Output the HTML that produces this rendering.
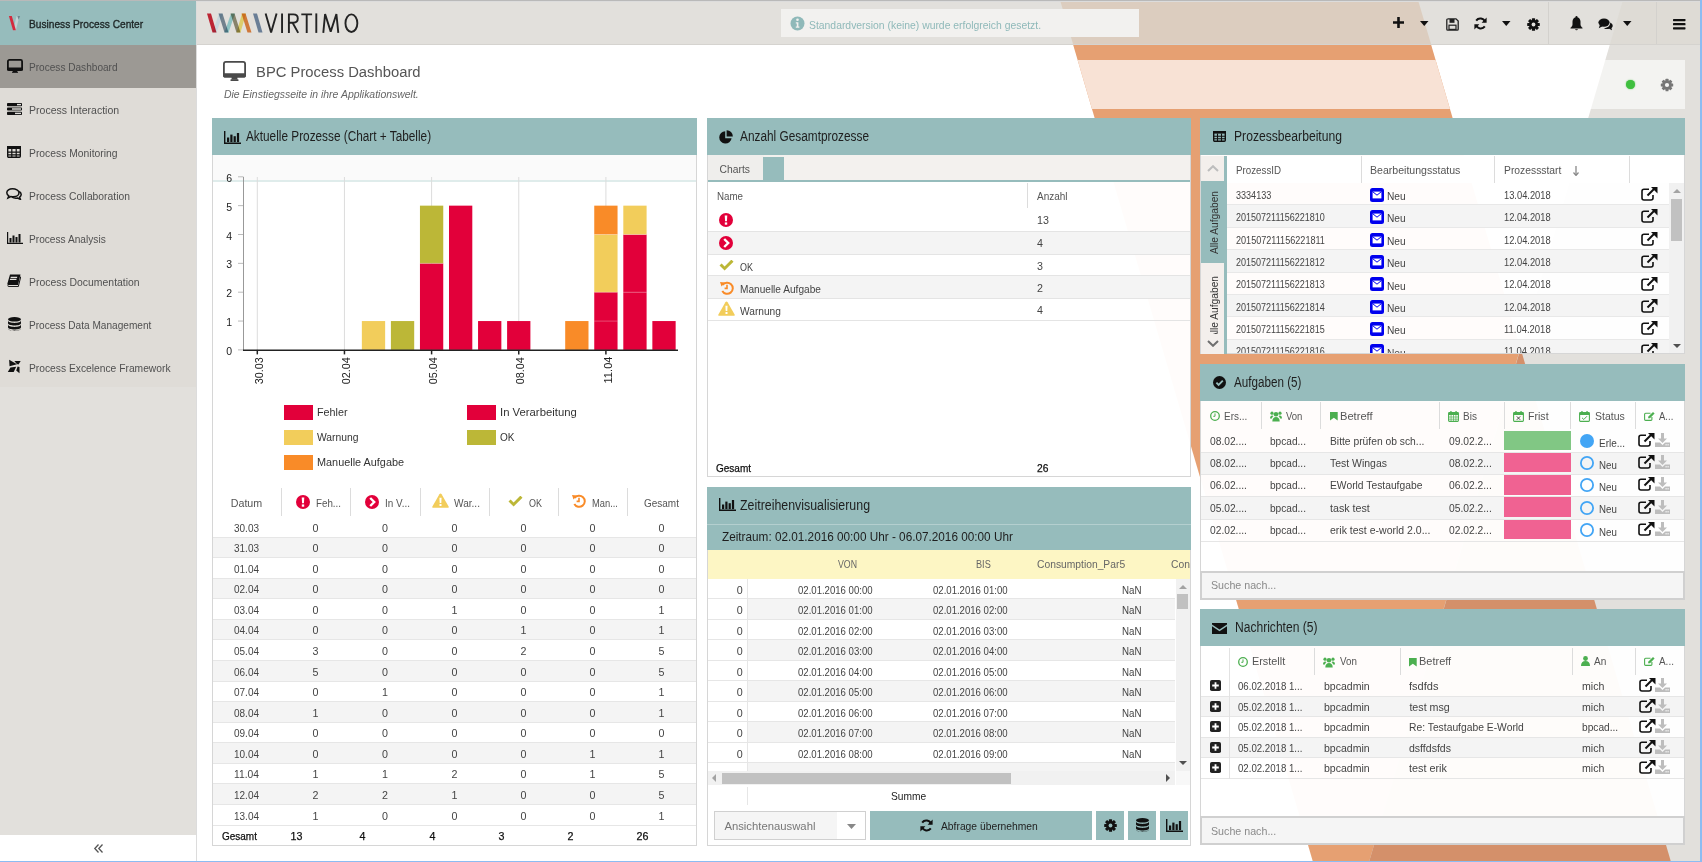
<!DOCTYPE html>
<html><head><meta charset="utf-8">
<style>
*{box-sizing:border-box;margin:0;padding:0}
html,body{width:1702px;height:862px;overflow:hidden;background:#fff;font-family:"Liberation Sans",sans-serif;color:#444}
.abs{position:absolute}
.t{position:absolute;white-space:nowrap;line-height:1}
/* background */
#bg{position:absolute;left:0;top:0;width:1702px;height:862px;overflow:hidden}
/* sidebar */
#side{position:absolute;left:0;top:1px;width:196px;height:860px;background:#fff}
#sidehdr{position:absolute;left:0;top:0;width:196px;height:44px;background:#96bcbc}
#sidenav{position:absolute;left:0;top:44px;width:196px;height:790px;background:#e2e0dc}
.nav{position:absolute;left:0;width:196px;height:43px}
.nav.act{background:#9c9994}
.nav .lbl{position:absolute;left:29px;top:16px;font-size:10.5px;color:#4a4a4a;letter-spacing:-0.2px;white-space:nowrap}
.nav svg{position:absolute;left:7px;top:13px}
#sideborder{position:absolute;left:196px;top:1px;width:1px;height:860px;background:#dcdcdc}
/* topbar */
#top{position:absolute;left:197px;top:1px;width:1503px;height:44px;background:#e2e0dc;border-bottom:1px solid #d5d3cf}
/* panels */
.panel{position:absolute;background:rgba(255,255,255,0.96);border:1px solid #d9d9d9}
.ph{position:absolute;left:-1px;top:-1px;right:-1px;height:37px;background:#96bcbc}
.ph .tt{position:absolute;left:34px;top:12px;font-size:13px;color:#222;letter-spacing:-0.5px;white-space:nowrap}
.ph svg{position:absolute;left:11px;top:11px}
</style></head>
<body>
<div id="bg">
  <!-- big orange parallelogram -->
  <svg class="abs" style="left:0;top:0" width="1702" height="862">
    <polygon points="1060,0 1418,0 1671,862 1313,862" fill="#e6a072"/>
    <polygon points="1077.6,60 1435.6,60 1450,109 1092,109" fill="#f8e2d5"/>
    <polygon points="1623,0 1702,0 1702,862 1369,862" fill="#e2e0dc"/>
    <polygon points="1520.6,348.6 1671,862 1369,862" fill="#d4906a"/>
  </svg>
</div>


<svg class="abs" style="left:223px;top:61px" width="23" height="20" viewBox="0 0 23 20"><rect x="0.9" y="0.9" width="21.2" height="14.8" rx="2" fill="none" stroke="#4a4a4a" stroke-width="1.8"/><rect x="0" y="12.2" width="23" height="4.3" rx="1.4" fill="#4a4a4a"/><rect x="8.6" y="16" width="5.8" height="2.6" fill="#4a4a4a"/><rect x="7.5" y="18.3" width="8" height="1.7" rx="0.5" fill="#4a4a4a"/></svg>
<div class="t" style="left:256.30px;top:63.96px;font-size:15.2px;color:#555;transform:scaleX(0.975);transform-origin:0 0">BPC Process Dashboard</div>
<div class="t" style="left:224.00px;top:88.93px;font-size:10.5px;color:#666;font-style:italic;transform:scaleX(0.995);transform-origin:0 0">Die Einstiegsseite in ihre Applikationswelt.</div>
<div class="abs" style="left:1540px;top:60px;width:145px;height:49px;background:rgba(255,255,255,0.6)"></div>
<div class="abs" style="left:1625.8px;top:79.8px;width:9.4px;height:9.4px;border-radius:50%;background:#3fbf3f;box-shadow:0 0 1.5px #3fbf3f"></div>
<svg class="abs" style="left:1660.25px;top:78px" width="14" height="14" viewBox="-7 -7 14 14"><g fill="#777"><circle r="4.8"/><rect x="-1.5" y="-6.2" width="3" height="12.4" rx="0.5"/><rect x="-1.5" y="-6.2" width="3" height="12.4" rx="0.5" transform="rotate(45)"/><rect x="-1.5" y="-6.2" width="3" height="12.4" rx="0.5" transform="rotate(90)"/><rect x="-1.5" y="-6.2" width="3" height="12.4" rx="0.5" transform="rotate(135)"/></g><circle r="2.1" fill="#f5f5f4"/></svg>
<div class="abs" style="left:212px;top:118px;width:485px;height:728px;background:rgba(255,255,255,0.97);border:1px solid #d6d6d6"></div>
<div class="abs" style="left:212px;top:118px;width:485px;height:37px;background:#96bcbc;"></div><div class="t" style="left:246.00px;top:128.87px;font-size:14px;color:#1e1e1e;transform:scaleX(0.843);transform-origin:0 0">Aktuelle Prozesse (Chart + Tabelle)</div>
<svg class="abs" style="left:224px;top:131px" width="17" height="13" viewBox="0 0 17 13"><path d="M0.7 0V12.3H17" fill="none" stroke="#111" stroke-width="1.4"/><rect x="3" y="6.5" width="2.2" height="4.6" fill="#111"/><rect x="6.3" y="3.6" width="2.2" height="7.5" fill="#111"/><rect x="9.6" y="5.2" width="2.2" height="5.9" fill="#111"/><rect x="12.9" y="2" width="2.2" height="9.1" fill="#111"/></svg>
<div class="abs" style="left:213px;top:155px;width:483px;height:25px;background:#fafafa;"></div>
<div class="abs" style="left:213px;top:180px;width:483px;height:2px;background:#dfeceb;"></div>
<svg class="abs" style="left:0;top:0" width="700" height="500"><line x1="238" y1="349.90" x2="243.5" y2="349.90" stroke="#bbb" stroke-width="1"/><line x1="238" y1="321.05" x2="243.5" y2="321.05" stroke="#bbb" stroke-width="1"/><line x1="238" y1="292.20" x2="243.5" y2="292.20" stroke="#bbb" stroke-width="1"/><line x1="238" y1="263.35" x2="243.5" y2="263.35" stroke="#bbb" stroke-width="1"/><line x1="238" y1="234.50" x2="243.5" y2="234.50" stroke="#bbb" stroke-width="1"/><line x1="238" y1="205.65" x2="243.5" y2="205.65" stroke="#bbb" stroke-width="1"/><line x1="238" y1="176.80" x2="243.5" y2="176.80" stroke="#bbb" stroke-width="1"/><line x1="243.5" y1="177" x2="243.5" y2="349.9" stroke="#999" stroke-width="1"/><line x1="257.30" y1="177" x2="257.30" y2="349.9" stroke="#dcdcdc" stroke-width="1"/><line x1="257.30" y1="349.9" x2="257.30" y2="354.4" stroke="#222" stroke-width="1.5"/><line x1="344.45" y1="177" x2="344.45" y2="349.9" stroke="#dcdcdc" stroke-width="1"/><line x1="344.45" y1="349.9" x2="344.45" y2="354.4" stroke="#222" stroke-width="1.5"/><line x1="431.60" y1="177" x2="431.60" y2="349.9" stroke="#dcdcdc" stroke-width="1"/><line x1="431.60" y1="349.9" x2="431.60" y2="354.4" stroke="#222" stroke-width="1.5"/><line x1="518.75" y1="177" x2="518.75" y2="349.9" stroke="#dcdcdc" stroke-width="1"/><line x1="518.75" y1="349.9" x2="518.75" y2="354.4" stroke="#222" stroke-width="1.5"/><line x1="605.90" y1="177" x2="605.90" y2="349.9" stroke="#dcdcdc" stroke-width="1"/><line x1="605.90" y1="349.9" x2="605.90" y2="354.4" stroke="#222" stroke-width="1.5"/><rect x="361.85" y="321.05" width="23.3" height="28.85" fill="#f2cd5b"/><rect x="390.90" y="321.05" width="23.3" height="28.85" fill="#bcb737"/><rect x="419.95" y="263.35" width="23.3" height="86.55" fill="#e2003a"/><rect x="419.95" y="205.65" width="23.3" height="57.70" fill="#bcb737"/><rect x="419.95" y="262.85" width="23.3" height="1" fill="#fff" opacity="0.25"/><rect x="449.00" y="205.65" width="23.3" height="144.25" fill="#e2003a"/><rect x="478.05" y="321.05" width="23.3" height="28.85" fill="#e2003a"/><rect x="507.10" y="321.05" width="23.3" height="28.85" fill="#e2003a"/><rect x="565.20" y="321.05" width="23.3" height="28.85" fill="#f98b28"/><rect x="594.25" y="321.05" width="23.3" height="28.85" fill="#e2003a"/><rect x="594.25" y="292.20" width="23.3" height="28.85" fill="#e2003a"/><rect x="594.25" y="320.55" width="23.3" height="1" fill="#fff" opacity="0.25"/><rect x="594.25" y="234.50" width="23.3" height="57.70" fill="#f2cd5b"/><rect x="594.25" y="291.70" width="23.3" height="1" fill="#fff" opacity="0.25"/><rect x="594.25" y="205.65" width="23.3" height="28.85" fill="#f98b28"/><rect x="594.25" y="234.00" width="23.3" height="1" fill="#fff" opacity="0.25"/><rect x="623.30" y="292.20" width="23.3" height="57.70" fill="#e2003a"/><rect x="623.30" y="234.50" width="23.3" height="57.70" fill="#e2003a"/><rect x="623.30" y="291.70" width="23.3" height="1" fill="#fff" opacity="0.25"/><rect x="623.30" y="205.65" width="23.3" height="28.85" fill="#f2cd5b"/><rect x="623.30" y="234.00" width="23.3" height="1" fill="#fff" opacity="0.25"/><rect x="652.35" y="321.05" width="23.3" height="28.85" fill="#e2003a"/><line x1="243" y1="350.30" x2="678" y2="350.30" stroke="#222" stroke-width="1.4"/></svg>
<div class="t" style="left:226.36px;top:345.93px;font-size:10.5px;color:#222">0</div>
<div class="t" style="left:226.36px;top:317.08px;font-size:10.5px;color:#222">1</div>
<div class="t" style="left:226.36px;top:288.23px;font-size:10.5px;color:#222">2</div>
<div class="t" style="left:226.36px;top:259.38px;font-size:10.5px;color:#222">3</div>
<div class="t" style="left:226.36px;top:230.53px;font-size:10.5px;color:#222">4</div>
<div class="t" style="left:226.36px;top:201.68px;font-size:10.5px;color:#222">5</div>
<div class="t" style="left:226.36px;top:172.83px;font-size:10.5px;color:#222">6</div>
<div class="t" style="left:254.00px;top:358px;font-size:10.5px;color:#222;transform:rotate(-90deg) translateX(-100%) scaleX(1.028);transform-origin:0 0">30.03</div>
<div class="t" style="left:341.15px;top:358px;font-size:10.5px;color:#222;transform:rotate(-90deg) translateX(-100%) scaleX(1.028);transform-origin:0 0">02.04</div>
<div class="t" style="left:428.30px;top:358px;font-size:10.5px;color:#222;transform:rotate(-90deg) translateX(-100%) scaleX(1.028);transform-origin:0 0">05.04</div>
<div class="t" style="left:515.45px;top:358px;font-size:10.5px;color:#222;transform:rotate(-90deg) translateX(-100%) scaleX(1.028);transform-origin:0 0">08.04</div>
<div class="t" style="left:602.60px;top:358px;font-size:10.5px;color:#222;transform:rotate(-90deg) translateX(-100%) scaleX(1.059);transform-origin:0 0">11.04</div>
<div class="abs" style="left:284.0px;top:404.8px;width:29px;height:15px;background:#e2003a;"></div>
<div class="t" style="left:316.70px;top:407.43px;font-size:10.5px;color:#333;transform:scaleX(1.025);transform-origin:0 0">Fehler</div>
<div class="abs" style="left:466.9px;top:404.8px;width:29px;height:15px;background:#e2003a;"></div>
<div class="t" style="left:499.60px;top:407.43px;font-size:10.5px;color:#333;transform:scaleX(1.078);transform-origin:0 0">In Verarbeitung</div>
<div class="abs" style="left:284.0px;top:429.8px;width:29px;height:15px;background:#f2cd5b;"></div>
<div class="t" style="left:316.70px;top:432.43px;font-size:10.5px;color:#333;transform:scaleX(0.983);transform-origin:0 0">Warnung</div>
<div class="abs" style="left:466.9px;top:429.8px;width:29px;height:15px;background:#bcb737;"></div>
<div class="t" style="left:499.60px;top:432.43px;font-size:10.5px;color:#333;transform:scaleX(0.956);transform-origin:0 0">OK</div>
<div class="abs" style="left:284.0px;top:454.8px;width:29px;height:15px;background:#f98b28;"></div>
<div class="t" style="left:316.70px;top:457.43px;font-size:10.5px;color:#333;transform:scaleX(1.035);transform-origin:0 0">Manuelle Aufgabe</div>
<div class="abs" style="left:281px;top:488px;width:1px;height:28px;background:#dcdcdc;"></div>
<div class="abs" style="left:350px;top:488px;width:1px;height:28px;background:#dcdcdc;"></div>
<div class="abs" style="left:420px;top:488px;width:1px;height:28px;background:#dcdcdc;"></div>
<div class="abs" style="left:489px;top:488px;width:1px;height:28px;background:#dcdcdc;"></div>
<div class="abs" style="left:558px;top:488px;width:1px;height:28px;background:#dcdcdc;"></div>
<div class="abs" style="left:627px;top:488px;width:1px;height:28px;background:#dcdcdc;"></div>
<div class="t" style="left:230.74px;top:497.96px;font-size:10.7px;color:#555">Datum</div>
<svg class="abs" style="left:295.7px;top:495px" width="14" height="14" viewBox="-7 -7 14 14"><circle r="7" fill="#e2003a"/><path d="M-1.3 -4.6H1.3L0.9 1.3H-0.9z" fill="#fff"/><rect x="-1.2" y="2.4" width="2.4" height="2.3" fill="#fff"/></svg>
<div class="t" style="left:316.00px;top:498.46px;font-size:10.7px;color:#555;transform:scaleX(0.914);transform-origin:0 0">Feh...</div>
<svg class="abs" style="left:365.2px;top:495px" width="14" height="14" viewBox="-7 -7 14 14"><circle r="7" fill="#e2003a"/><path d="M-1.8 -4L2.2 0 -1.8 4" fill="none" stroke="#fff" stroke-width="2.4"/></svg>
<div class="t" style="left:385.00px;top:498.46px;font-size:10.7px;color:#555;transform:scaleX(0.927);transform-origin:0 0">In V...</div>
<svg class="abs" style="left:432px;top:493px" width="17" height="15" viewBox="0 0 17 15"><path d="M8.5 0.5C9 0.5 9.3 0.8 9.6 1.2L16.6 13.4C17 14.1 16.6 14.8 15.8 14.8H1.2C0.4 14.8 0 14.1 0.4 13.4L7.4 1.2C7.7 0.8 8 0.5 8.5 0.5z" fill="#f2cd5b"/><path d="M7.4 4.8H9.6L9.3 10H7.7z" fill="#fff"/><rect x="7.5" y="11" width="2" height="2" fill="#fff"/></svg>
<div class="t" style="left:453.80px;top:498.46px;font-size:10.7px;color:#555;transform:scaleX(0.944);transform-origin:0 0">War...</div>
<svg class="abs" style="left:507.6px;top:496px" width="15" height="11" viewBox="0 0 15 11"><path d="M0.5 5.5L2.6 3.4 5.6 6.4 12.4 -0.4 14.5 1.7 5.6 10.6z" fill="#bcb737"/></svg>
<div class="t" style="left:528.70px;top:498.46px;font-size:10.7px;color:#555;transform:scaleX(0.841);transform-origin:0 0">OK</div>
<svg class="abs" style="left:571.6px;top:494px" width="14" height="14" viewBox="0 0 14 14"><path d="M2.6 4A5.6 5.6 0 1 1 2.3 10" fill="none" stroke="#f98b28" stroke-width="2"/><polygon points="0,1 5,1.5 1.5,5.5" fill="#f98b28"/><path d="M7 3.8V7.4H4.6" fill="none" stroke="#f98b28" stroke-width="1.6"/></svg>
<div class="t" style="left:592.20px;top:498.46px;font-size:10.7px;color:#555;transform:scaleX(0.874);transform-origin:0 0">Man...</div>
<div class="t" style="left:644.30px;top:497.96px;font-size:10.7px;color:#555;transform:scaleX(0.934);transform-origin:0 0">Gesamt</div>
<div class="abs" style="left:213px;top:536.57px;width:483px;height:1px;background:#e6e6e6;"></div>
<div class="t" style="left:234.10px;top:522.64px;font-size:10.7px;color:#444;transform:scaleX(0.934);transform-origin:0 0">30.03</div>
<div class="t" style="left:312.52px;top:522.64px;font-size:10.7px;color:#444">0</div>
<div class="t" style="left:382.02px;top:522.64px;font-size:10.7px;color:#444">0</div>
<div class="t" style="left:451.52px;top:522.64px;font-size:10.7px;color:#444">0</div>
<div class="t" style="left:520.52px;top:522.64px;font-size:10.7px;color:#444">0</div>
<div class="t" style="left:589.52px;top:522.64px;font-size:10.7px;color:#444">0</div>
<div class="t" style="left:658.52px;top:522.64px;font-size:10.7px;color:#444">0</div>
<div class="abs" style="left:213px;top:537.57px;width:483px;height:20.57px;background:#f4f4f4;"></div>
<div class="abs" style="left:213px;top:557.14px;width:483px;height:1px;background:#e6e6e6;"></div>
<div class="t" style="left:234.10px;top:543.21px;font-size:10.7px;color:#444;transform:scaleX(0.934);transform-origin:0 0">31.03</div>
<div class="t" style="left:312.52px;top:543.21px;font-size:10.7px;color:#444">0</div>
<div class="t" style="left:382.02px;top:543.21px;font-size:10.7px;color:#444">0</div>
<div class="t" style="left:451.52px;top:543.21px;font-size:10.7px;color:#444">0</div>
<div class="t" style="left:520.52px;top:543.21px;font-size:10.7px;color:#444">0</div>
<div class="t" style="left:589.52px;top:543.21px;font-size:10.7px;color:#444">0</div>
<div class="t" style="left:658.52px;top:543.21px;font-size:10.7px;color:#444">0</div>
<div class="abs" style="left:213px;top:577.71px;width:483px;height:1px;background:#e6e6e6;"></div>
<div class="t" style="left:234.10px;top:563.78px;font-size:10.7px;color:#444;transform:scaleX(0.934);transform-origin:0 0">01.04</div>
<div class="t" style="left:312.52px;top:563.78px;font-size:10.7px;color:#444">0</div>
<div class="t" style="left:382.02px;top:563.78px;font-size:10.7px;color:#444">0</div>
<div class="t" style="left:451.52px;top:563.78px;font-size:10.7px;color:#444">0</div>
<div class="t" style="left:520.52px;top:563.78px;font-size:10.7px;color:#444">0</div>
<div class="t" style="left:589.52px;top:563.78px;font-size:10.7px;color:#444">0</div>
<div class="t" style="left:658.52px;top:563.78px;font-size:10.7px;color:#444">0</div>
<div class="abs" style="left:213px;top:578.71px;width:483px;height:20.57px;background:#f4f4f4;"></div>
<div class="abs" style="left:213px;top:598.28px;width:483px;height:1px;background:#e6e6e6;"></div>
<div class="t" style="left:234.10px;top:584.35px;font-size:10.7px;color:#444;transform:scaleX(0.934);transform-origin:0 0">02.04</div>
<div class="t" style="left:312.52px;top:584.35px;font-size:10.7px;color:#444">0</div>
<div class="t" style="left:382.02px;top:584.35px;font-size:10.7px;color:#444">0</div>
<div class="t" style="left:451.52px;top:584.35px;font-size:10.7px;color:#444">0</div>
<div class="t" style="left:520.52px;top:584.35px;font-size:10.7px;color:#444">0</div>
<div class="t" style="left:589.52px;top:584.35px;font-size:10.7px;color:#444">0</div>
<div class="t" style="left:658.52px;top:584.35px;font-size:10.7px;color:#444">0</div>
<div class="abs" style="left:213px;top:618.85px;width:483px;height:1px;background:#e6e6e6;"></div>
<div class="t" style="left:234.10px;top:604.92px;font-size:10.7px;color:#444;transform:scaleX(0.934);transform-origin:0 0">03.04</div>
<div class="t" style="left:312.52px;top:604.92px;font-size:10.7px;color:#444">0</div>
<div class="t" style="left:382.02px;top:604.92px;font-size:10.7px;color:#444">0</div>
<div class="t" style="left:451.52px;top:604.92px;font-size:10.7px;color:#444">1</div>
<div class="t" style="left:520.52px;top:604.92px;font-size:10.7px;color:#444">0</div>
<div class="t" style="left:589.52px;top:604.92px;font-size:10.7px;color:#444">0</div>
<div class="t" style="left:658.52px;top:604.92px;font-size:10.7px;color:#444">1</div>
<div class="abs" style="left:213px;top:619.85px;width:483px;height:20.57px;background:#f4f4f4;"></div>
<div class="abs" style="left:213px;top:639.42px;width:483px;height:1px;background:#e6e6e6;"></div>
<div class="t" style="left:234.10px;top:625.49px;font-size:10.7px;color:#444;transform:scaleX(0.934);transform-origin:0 0">04.04</div>
<div class="t" style="left:312.52px;top:625.49px;font-size:10.7px;color:#444">0</div>
<div class="t" style="left:382.02px;top:625.49px;font-size:10.7px;color:#444">0</div>
<div class="t" style="left:451.52px;top:625.49px;font-size:10.7px;color:#444">0</div>
<div class="t" style="left:520.52px;top:625.49px;font-size:10.7px;color:#444">1</div>
<div class="t" style="left:589.52px;top:625.49px;font-size:10.7px;color:#444">0</div>
<div class="t" style="left:658.52px;top:625.49px;font-size:10.7px;color:#444">1</div>
<div class="abs" style="left:213px;top:659.99px;width:483px;height:1px;background:#e6e6e6;"></div>
<div class="t" style="left:234.10px;top:646.06px;font-size:10.7px;color:#444;transform:scaleX(0.934);transform-origin:0 0">05.04</div>
<div class="t" style="left:312.52px;top:646.06px;font-size:10.7px;color:#444">3</div>
<div class="t" style="left:382.02px;top:646.06px;font-size:10.7px;color:#444">0</div>
<div class="t" style="left:451.52px;top:646.06px;font-size:10.7px;color:#444">0</div>
<div class="t" style="left:520.52px;top:646.06px;font-size:10.7px;color:#444">2</div>
<div class="t" style="left:589.52px;top:646.06px;font-size:10.7px;color:#444">0</div>
<div class="t" style="left:658.52px;top:646.06px;font-size:10.7px;color:#444">5</div>
<div class="abs" style="left:213px;top:660.99px;width:483px;height:20.57px;background:#f4f4f4;"></div>
<div class="abs" style="left:213px;top:680.56px;width:483px;height:1px;background:#e6e6e6;"></div>
<div class="t" style="left:234.10px;top:666.63px;font-size:10.7px;color:#444;transform:scaleX(0.934);transform-origin:0 0">06.04</div>
<div class="t" style="left:312.52px;top:666.63px;font-size:10.7px;color:#444">5</div>
<div class="t" style="left:382.02px;top:666.63px;font-size:10.7px;color:#444">0</div>
<div class="t" style="left:451.52px;top:666.63px;font-size:10.7px;color:#444">0</div>
<div class="t" style="left:520.52px;top:666.63px;font-size:10.7px;color:#444">0</div>
<div class="t" style="left:589.52px;top:666.63px;font-size:10.7px;color:#444">0</div>
<div class="t" style="left:658.52px;top:666.63px;font-size:10.7px;color:#444">5</div>
<div class="abs" style="left:213px;top:701.13px;width:483px;height:1px;background:#e6e6e6;"></div>
<div class="t" style="left:234.10px;top:687.20px;font-size:10.7px;color:#444;transform:scaleX(0.934);transform-origin:0 0">07.04</div>
<div class="t" style="left:312.52px;top:687.20px;font-size:10.7px;color:#444">0</div>
<div class="t" style="left:382.02px;top:687.20px;font-size:10.7px;color:#444">1</div>
<div class="t" style="left:451.52px;top:687.20px;font-size:10.7px;color:#444">0</div>
<div class="t" style="left:520.52px;top:687.20px;font-size:10.7px;color:#444">0</div>
<div class="t" style="left:589.52px;top:687.20px;font-size:10.7px;color:#444">0</div>
<div class="t" style="left:658.52px;top:687.20px;font-size:10.7px;color:#444">1</div>
<div class="abs" style="left:213px;top:702.13px;width:483px;height:20.57px;background:#f4f4f4;"></div>
<div class="abs" style="left:213px;top:721.7px;width:483px;height:1px;background:#e6e6e6;"></div>
<div class="t" style="left:234.10px;top:707.77px;font-size:10.7px;color:#444;transform:scaleX(0.934);transform-origin:0 0">08.04</div>
<div class="t" style="left:312.52px;top:707.77px;font-size:10.7px;color:#444">1</div>
<div class="t" style="left:382.02px;top:707.77px;font-size:10.7px;color:#444">0</div>
<div class="t" style="left:451.52px;top:707.77px;font-size:10.7px;color:#444">0</div>
<div class="t" style="left:520.52px;top:707.77px;font-size:10.7px;color:#444">0</div>
<div class="t" style="left:589.52px;top:707.77px;font-size:10.7px;color:#444">0</div>
<div class="t" style="left:658.52px;top:707.77px;font-size:10.7px;color:#444">1</div>
<div class="abs" style="left:213px;top:742.27px;width:483px;height:1px;background:#e6e6e6;"></div>
<div class="t" style="left:234.10px;top:728.34px;font-size:10.7px;color:#444;transform:scaleX(0.934);transform-origin:0 0">09.04</div>
<div class="t" style="left:312.52px;top:728.34px;font-size:10.7px;color:#444">0</div>
<div class="t" style="left:382.02px;top:728.34px;font-size:10.7px;color:#444">0</div>
<div class="t" style="left:451.52px;top:728.34px;font-size:10.7px;color:#444">0</div>
<div class="t" style="left:520.52px;top:728.34px;font-size:10.7px;color:#444">0</div>
<div class="t" style="left:589.52px;top:728.34px;font-size:10.7px;color:#444">0</div>
<div class="t" style="left:658.52px;top:728.34px;font-size:10.7px;color:#444">0</div>
<div class="abs" style="left:213px;top:743.27px;width:483px;height:20.57px;background:#f4f4f4;"></div>
<div class="abs" style="left:213px;top:762.84px;width:483px;height:1px;background:#e6e6e6;"></div>
<div class="t" style="left:234.10px;top:748.91px;font-size:10.7px;color:#444;transform:scaleX(0.934);transform-origin:0 0">10.04</div>
<div class="t" style="left:312.52px;top:748.91px;font-size:10.7px;color:#444">0</div>
<div class="t" style="left:382.02px;top:748.91px;font-size:10.7px;color:#444">0</div>
<div class="t" style="left:451.52px;top:748.91px;font-size:10.7px;color:#444">0</div>
<div class="t" style="left:520.52px;top:748.91px;font-size:10.7px;color:#444">0</div>
<div class="t" style="left:589.52px;top:748.91px;font-size:10.7px;color:#444">1</div>
<div class="t" style="left:658.52px;top:748.91px;font-size:10.7px;color:#444">1</div>
<div class="abs" style="left:213px;top:783.41px;width:483px;height:1px;background:#e6e6e6;"></div>
<div class="t" style="left:234.10px;top:769.48px;font-size:10.7px;color:#444;transform:scaleX(0.962);transform-origin:0 0">11.04</div>
<div class="t" style="left:312.52px;top:769.48px;font-size:10.7px;color:#444">1</div>
<div class="t" style="left:382.02px;top:769.48px;font-size:10.7px;color:#444">1</div>
<div class="t" style="left:451.52px;top:769.48px;font-size:10.7px;color:#444">2</div>
<div class="t" style="left:520.52px;top:769.48px;font-size:10.7px;color:#444">0</div>
<div class="t" style="left:589.52px;top:769.48px;font-size:10.7px;color:#444">1</div>
<div class="t" style="left:658.52px;top:769.48px;font-size:10.7px;color:#444">5</div>
<div class="abs" style="left:213px;top:784.41px;width:483px;height:20.57px;background:#f4f4f4;"></div>
<div class="abs" style="left:213px;top:803.98px;width:483px;height:1px;background:#e6e6e6;"></div>
<div class="t" style="left:234.10px;top:790.05px;font-size:10.7px;color:#444;transform:scaleX(0.934);transform-origin:0 0">12.04</div>
<div class="t" style="left:312.52px;top:790.05px;font-size:10.7px;color:#444">2</div>
<div class="t" style="left:382.02px;top:790.05px;font-size:10.7px;color:#444">2</div>
<div class="t" style="left:451.52px;top:790.05px;font-size:10.7px;color:#444">1</div>
<div class="t" style="left:520.52px;top:790.05px;font-size:10.7px;color:#444">0</div>
<div class="t" style="left:589.52px;top:790.05px;font-size:10.7px;color:#444">0</div>
<div class="t" style="left:658.52px;top:790.05px;font-size:10.7px;color:#444">5</div>
<div class="abs" style="left:213px;top:824.55px;width:483px;height:1px;background:#e6e6e6;"></div>
<div class="t" style="left:234.10px;top:810.62px;font-size:10.7px;color:#444;transform:scaleX(0.934);transform-origin:0 0">13.04</div>
<div class="t" style="left:312.52px;top:810.62px;font-size:10.7px;color:#444">1</div>
<div class="t" style="left:382.02px;top:810.62px;font-size:10.7px;color:#444">0</div>
<div class="t" style="left:451.52px;top:810.62px;font-size:10.7px;color:#444">0</div>
<div class="t" style="left:520.52px;top:810.62px;font-size:10.7px;color:#444">0</div>
<div class="t" style="left:589.52px;top:810.62px;font-size:10.7px;color:#444">0</div>
<div class="t" style="left:658.52px;top:810.62px;font-size:10.7px;color:#444">1</div>
<div class="t" style="left:221.70px;top:831.06px;font-size:10.7px;color:#111;transform:scaleX(0.934);transform-origin:0 0;-webkit-text-stroke:0.25px #111">Gesamt</div>
<div class="t" style="left:290.50px;top:831.06px;font-size:10.7px;color:#111;-webkit-text-stroke:0.25px #111">13</div>
<div class="t" style="left:359.50px;top:831.06px;font-size:10.7px;color:#111;-webkit-text-stroke:0.25px #111">4</div>
<div class="t" style="left:429.50px;top:831.06px;font-size:10.7px;color:#111;-webkit-text-stroke:0.25px #111">4</div>
<div class="t" style="left:498.50px;top:831.06px;font-size:10.7px;color:#111;-webkit-text-stroke:0.25px #111">3</div>
<div class="t" style="left:567.50px;top:831.06px;font-size:10.7px;color:#111;-webkit-text-stroke:0.25px #111">2</div>
<div class="t" style="left:636.50px;top:831.06px;font-size:10.7px;color:#111;-webkit-text-stroke:0.25px #111">26</div>
<div class="abs" style="left:707px;top:118px;width:484px;height:359px;background:rgba(255,255,255,0.97);border:1px solid #d6d6d6"></div>
<div class="abs" style="left:707px;top:118px;width:484px;height:37px;background:#96bcbc;"></div><div class="t" style="left:740.00px;top:128.87px;font-size:14px;color:#1e1e1e;transform:scaleX(0.846);transform-origin:0 0">Anzahl Gesamtprozesse</div>
<svg class="abs" style="left:719px;top:129.5px" width="14" height="14" viewBox="0 0 14 14"><path d="M6.2 1.2A6.2 6.2 0 1 0 12.6 8.2H6.2z" fill="#111"/><path d="M7.6 0.2A6 6 0 0 1 13.8 6.4H7.6z" fill="#111"/><path d="M8.6 7.4H13.5L11.6 11.8z" fill="#111" opacity="0"/></svg>
<div class="abs" style="left:708px;top:155px;width:482px;height:25.3px;background:#f3f1ee;"></div>
<div class="abs" style="left:708px;top:155px;width:56px;height:25.3px;background:#efeeec;"></div>
<div class="t" style="left:719.60px;top:164.70px;font-size:10.3px;color:#555">Charts</div>
<div class="abs" style="left:763px;top:157px;width:21px;height:23.3px;background:#96bcbc;"></div>
<div class="abs" style="left:708px;top:180.3px;width:482px;height:1.7px;background:#96bcbc;"></div>
<div class="abs" style="left:1027px;top:182.5px;width:1px;height:25.5px;background:#dcdcdc;"></div>
<div class="t" style="left:716.50px;top:190.96px;font-size:10.7px;color:#555;transform:scaleX(0.914);transform-origin:0 0">Name</div>
<div class="t" style="left:1037.00px;top:190.96px;font-size:10.7px;color:#555;transform:scaleX(0.935);transform-origin:0 0">Anzahl</div>
<div class="abs" style="left:708px;top:230.5px;width:482px;height:1px;background:#e4e4e4;"></div>
<div class="t" style="left:1037.00px;top:215.41px;font-size:10.7px;color:#444">13</div>
<div class="abs" style="left:708px;top:231.5px;width:482px;height:23.0px;background:#f4f4f4;"></div>
<div class="abs" style="left:708px;top:253.5px;width:482px;height:1px;background:#e4e4e4;"></div>
<div class="t" style="left:1037.00px;top:238.16px;font-size:10.7px;color:#444">4</div>
<div class="abs" style="left:708px;top:275.4px;width:482px;height:1px;background:#e4e4e4;"></div>
<div class="t" style="left:1037.00px;top:260.61px;font-size:10.7px;color:#444">3</div>
<div class="abs" style="left:708px;top:276.4px;width:482px;height:22.4px;background:#f4f4f4;"></div>
<div class="abs" style="left:708px;top:297.8px;width:482px;height:1px;background:#e4e4e4;"></div>
<div class="t" style="left:1037.00px;top:282.76px;font-size:10.7px;color:#444">2</div>
<div class="abs" style="left:708px;top:320.3px;width:482px;height:1px;background:#e4e4e4;"></div>
<div class="t" style="left:1037.00px;top:305.21px;font-size:10.7px;color:#444">4</div>
<svg class="abs" style="left:719.3px;top:213px" width="14" height="14" viewBox="-7 -7 14 14"><circle r="7" fill="#e2003a"/><path d="M-1.3 -4.6H1.3L0.9 1.3H-0.9z" fill="#fff"/><rect x="-1.2" y="2.4" width="2.4" height="2.3" fill="#fff"/></svg>
<svg class="abs" style="left:719.3px;top:235.6px" width="14" height="14" viewBox="-7 -7 14 14"><circle r="7" fill="#e2003a"/><path d="M-1.8 -4L2.2 0 -1.8 4" fill="none" stroke="#fff" stroke-width="2.4"/></svg>
<svg class="abs" style="left:719px;top:259.7px" width="15" height="11" viewBox="0 0 15 11"><path d="M0.5 5.5L2.6 3.4 5.6 6.4 12.4 -0.4 14.5 1.7 5.6 10.6z" fill="#bcb737"/></svg>
<div class="t" style="left:739.50px;top:261.76px;font-size:10.7px;color:#444;transform:scaleX(0.841);transform-origin:0 0">OK</div>
<svg class="abs" style="left:719.5px;top:280.5px" width="14" height="14" viewBox="0 0 14 14"><path d="M2.6 4A5.6 5.6 0 1 1 2.3 10" fill="none" stroke="#f98b28" stroke-width="2"/><polygon points="0,1 5,1.5 1.5,5.5" fill="#f98b28"/><path d="M7 3.8V7.4H4.6" fill="none" stroke="#f98b28" stroke-width="1.6"/></svg>
<div class="t" style="left:739.50px;top:283.96px;font-size:10.7px;color:#444;transform:scaleX(0.945);transform-origin:0 0">Manuelle Aufgabe</div>
<svg class="abs" style="left:718px;top:301.3px" width="17" height="15" viewBox="0 0 17 15"><path d="M8.5 0.5C9 0.5 9.3 0.8 9.6 1.2L16.6 13.4C17 14.1 16.6 14.8 15.8 14.8H1.2C0.4 14.8 0 14.1 0.4 13.4L7.4 1.2C7.7 0.8 8 0.5 8.5 0.5z" fill="#f2cd5b"/><path d="M7.4 4.8H9.6L9.3 10H7.7z" fill="#fff"/><rect x="7.5" y="11" width="2" height="2" fill="#fff"/></svg>
<div class="t" style="left:739.50px;top:306.46px;font-size:10.7px;color:#444;transform:scaleX(0.953);transform-origin:0 0">Warnung</div>
<div class="t" style="left:716.00px;top:462.66px;font-size:10.7px;color:#111;transform:scaleX(0.937);transform-origin:0 0;-webkit-text-stroke:0.25px #111">Gesamt</div>
<div class="t" style="left:1036.60px;top:462.66px;font-size:10.7px;color:#111;transform:scaleX(0.958);transform-origin:0 0;-webkit-text-stroke:0.25px #111">26</div>
<div class="abs" style="left:707px;top:487px;width:484px;height:359px;background:rgba(255,255,255,0.97);border:1px solid #d6d6d6"></div>
<div class="abs" style="left:707px;top:487px;width:484px;height:36.5px;background:#96bcbc;"></div><div class="t" style="left:740.40px;top:497.87px;font-size:14px;color:#1e1e1e;transform:scaleX(0.884);transform-origin:0 0">Zeitreihenvisualisierung</div>
<svg class="abs" style="left:719px;top:498px" width="17" height="13" viewBox="0 0 17 13"><path d="M0.7 0V12.3H17" fill="none" stroke="#111" stroke-width="1.4"/><rect x="3" y="6.5" width="2.2" height="4.6" fill="#111"/><rect x="6.3" y="3.6" width="2.2" height="7.5" fill="#111"/><rect x="9.6" y="5.2" width="2.2" height="5.9" fill="#111"/><rect x="12.9" y="2" width="2.2" height="9.1" fill="#111"/></svg>
<div class="abs" style="left:707px;top:523.5px;width:484px;height:1.5px;background:#b4cfcf;"></div>
<div class="abs" style="left:707px;top:525px;width:484px;height:25px;background:#96bcbc;"></div>
<div class="t" style="left:722.00px;top:530.80px;font-size:12.9px;color:#1e1e1e;transform:scaleX(0.912);transform-origin:0 0">Zeitraum: 02.01.2016 00:00 Uhr - 06.07.2016 00:00 Uhr</div>
<div class="abs" style="left:708px;top:550px;width:482px;height:28.7px;background:#fdf6c4;"></div>
<div class="t" style="left:837.90px;top:559.06px;font-size:10.7px;color:#666;transform:scaleX(0.819);transform-origin:0 0">VON</div>
<div class="t" style="left:976.20px;top:559.06px;font-size:10.7px;color:#666;transform:scaleX(0.858);transform-origin:0 0">BIS</div>
<div class="t" style="left:1037.00px;top:559.06px;font-size:10.7px;color:#666;transform:scaleX(0.963);transform-origin:0 0">Consumption_Par5</div>
<div class="abs" style="left:1171px;top:550px;width:19px;height:28px;overflow:hidden"><div class="t" style="left:0.00px;top:9.06px;font-size:10.7px;color:#666;transform:scaleX(0.963);transform-origin:0 0">Consumption_Par6</div></div>
<div class="abs" style="left:708px;top:578.7px;width:468px;height:192.3px;background:#fff;"></div>
<div class="abs" style="left:708px;top:598.2px;width:467px;height:1px;background:#e6e6e6;"></div>
<div class="t" style="left:736.75px;top:584.91px;font-size:10.7px;color:#444">0</div>
<div class="t" style="left:798.40px;top:584.91px;font-size:10.7px;color:#444;transform:scaleX(0.896);transform-origin:0 0">02.01.2016 00:00</div>
<div class="t" style="left:932.70px;top:584.91px;font-size:10.7px;color:#444;transform:scaleX(0.896);transform-origin:0 0">02.01.2016 01:00</div>
<div class="t" style="left:1121.50px;top:584.91px;font-size:10.7px;color:#444;transform:scaleX(0.911);transform-origin:0 0">NaN</div>
<div class="abs" style="left:748px;top:599.2px;width:427px;height:20.5px;background:#f4f4f4;"></div>
<div class="abs" style="left:708px;top:618.7px;width:467px;height:1px;background:#e6e6e6;"></div>
<div class="t" style="left:736.75px;top:605.41px;font-size:10.7px;color:#444">0</div>
<div class="t" style="left:798.40px;top:605.41px;font-size:10.7px;color:#444;transform:scaleX(0.896);transform-origin:0 0">02.01.2016 01:00</div>
<div class="t" style="left:932.70px;top:605.41px;font-size:10.7px;color:#444;transform:scaleX(0.896);transform-origin:0 0">02.01.2016 02:00</div>
<div class="t" style="left:1121.50px;top:605.41px;font-size:10.7px;color:#444;transform:scaleX(0.911);transform-origin:0 0">NaN</div>
<div class="abs" style="left:708px;top:639.2px;width:467px;height:1px;background:#e6e6e6;"></div>
<div class="t" style="left:736.75px;top:625.91px;font-size:10.7px;color:#444">0</div>
<div class="t" style="left:798.40px;top:625.91px;font-size:10.7px;color:#444;transform:scaleX(0.896);transform-origin:0 0">02.01.2016 02:00</div>
<div class="t" style="left:932.70px;top:625.91px;font-size:10.7px;color:#444;transform:scaleX(0.896);transform-origin:0 0">02.01.2016 03:00</div>
<div class="t" style="left:1121.50px;top:625.91px;font-size:10.7px;color:#444;transform:scaleX(0.911);transform-origin:0 0">NaN</div>
<div class="abs" style="left:748px;top:640.2px;width:427px;height:20.5px;background:#f4f4f4;"></div>
<div class="abs" style="left:708px;top:659.7px;width:467px;height:1px;background:#e6e6e6;"></div>
<div class="t" style="left:736.75px;top:646.41px;font-size:10.7px;color:#444">0</div>
<div class="t" style="left:798.40px;top:646.41px;font-size:10.7px;color:#444;transform:scaleX(0.896);transform-origin:0 0">02.01.2016 03:00</div>
<div class="t" style="left:932.70px;top:646.41px;font-size:10.7px;color:#444;transform:scaleX(0.896);transform-origin:0 0">02.01.2016 04:00</div>
<div class="t" style="left:1121.50px;top:646.41px;font-size:10.7px;color:#444;transform:scaleX(0.911);transform-origin:0 0">NaN</div>
<div class="abs" style="left:708px;top:680.2px;width:467px;height:1px;background:#e6e6e6;"></div>
<div class="t" style="left:736.75px;top:666.91px;font-size:10.7px;color:#444">0</div>
<div class="t" style="left:798.40px;top:666.91px;font-size:10.7px;color:#444;transform:scaleX(0.896);transform-origin:0 0">02.01.2016 04:00</div>
<div class="t" style="left:932.70px;top:666.91px;font-size:10.7px;color:#444;transform:scaleX(0.896);transform-origin:0 0">02.01.2016 05:00</div>
<div class="t" style="left:1121.50px;top:666.91px;font-size:10.7px;color:#444;transform:scaleX(0.911);transform-origin:0 0">NaN</div>
<div class="abs" style="left:748px;top:681.2px;width:427px;height:20.5px;background:#f4f4f4;"></div>
<div class="abs" style="left:708px;top:700.7px;width:467px;height:1px;background:#e6e6e6;"></div>
<div class="t" style="left:736.75px;top:687.41px;font-size:10.7px;color:#444">0</div>
<div class="t" style="left:798.40px;top:687.41px;font-size:10.7px;color:#444;transform:scaleX(0.896);transform-origin:0 0">02.01.2016 05:00</div>
<div class="t" style="left:932.70px;top:687.41px;font-size:10.7px;color:#444;transform:scaleX(0.896);transform-origin:0 0">02.01.2016 06:00</div>
<div class="t" style="left:1121.50px;top:687.41px;font-size:10.7px;color:#444;transform:scaleX(0.911);transform-origin:0 0">NaN</div>
<div class="abs" style="left:708px;top:721.2px;width:467px;height:1px;background:#e6e6e6;"></div>
<div class="t" style="left:736.75px;top:707.91px;font-size:10.7px;color:#444">0</div>
<div class="t" style="left:798.40px;top:707.91px;font-size:10.7px;color:#444;transform:scaleX(0.896);transform-origin:0 0">02.01.2016 06:00</div>
<div class="t" style="left:932.70px;top:707.91px;font-size:10.7px;color:#444;transform:scaleX(0.896);transform-origin:0 0">02.01.2016 07:00</div>
<div class="t" style="left:1121.50px;top:707.91px;font-size:10.7px;color:#444;transform:scaleX(0.911);transform-origin:0 0">NaN</div>
<div class="abs" style="left:748px;top:722.2px;width:427px;height:20.5px;background:#f4f4f4;"></div>
<div class="abs" style="left:708px;top:741.7px;width:467px;height:1px;background:#e6e6e6;"></div>
<div class="t" style="left:736.75px;top:728.41px;font-size:10.7px;color:#444">0</div>
<div class="t" style="left:798.40px;top:728.41px;font-size:10.7px;color:#444;transform:scaleX(0.896);transform-origin:0 0">02.01.2016 07:00</div>
<div class="t" style="left:932.70px;top:728.41px;font-size:10.7px;color:#444;transform:scaleX(0.896);transform-origin:0 0">02.01.2016 08:00</div>
<div class="t" style="left:1121.50px;top:728.41px;font-size:10.7px;color:#444;transform:scaleX(0.911);transform-origin:0 0">NaN</div>
<div class="abs" style="left:708px;top:762.2px;width:467px;height:1px;background:#e6e6e6;"></div>
<div class="t" style="left:736.75px;top:748.91px;font-size:10.7px;color:#444">0</div>
<div class="t" style="left:798.40px;top:748.91px;font-size:10.7px;color:#444;transform:scaleX(0.896);transform-origin:0 0">02.01.2016 08:00</div>
<div class="t" style="left:932.70px;top:748.91px;font-size:10.7px;color:#444;transform:scaleX(0.896);transform-origin:0 0">02.01.2016 09:00</div>
<div class="t" style="left:1121.50px;top:748.91px;font-size:10.7px;color:#444;transform:scaleX(0.911);transform-origin:0 0">NaN</div>
<div class="abs" style="left:748px;top:763.2px;width:427px;height:7.8px;background:#f4f4f4;"></div>
<div class="abs" style="left:747px;top:578.7px;width:1px;height:192.3px;background:#e6e6e6;"></div>
<div class="abs" style="left:1176px;top:578.7px;width:14px;height:192.3px;background:#f1f1f1;"></div>
<svg class="abs" style="left:1179px;top:585px" width="8" height="4" viewBox="0 0 8 4"><polygon points="0,4 8,4 4,0" fill="#a3a3a3"/></svg>
<div class="abs" style="left:1177px;top:594px;width:11px;height:15px;background:#c1c1c1;"></div>
<svg class="abs" style="left:1179px;top:761px" width="8" height="4" viewBox="0 0 8 4"><polygon points="0,0 8,0 4,4" fill="#505050"/></svg>
<div class="abs" style="left:708px;top:771px;width:467px;height:14.2px;background:#f1f1f1;"></div>
<svg class="abs" style="left:712px;top:774px" width="4" height="8" viewBox="0 0 4 8"><polygon points="4,0 4,8 0,4" fill="#a3a3a3"/></svg>
<div class="abs" style="left:722px;top:773.4px;width:289px;height:11px;background:#c1c1c1;"></div>
<svg class="abs" style="left:1166px;top:774px" width="4" height="8" viewBox="0 0 4 8"><polygon points="0,0 0,8 4,4" fill="#505050"/></svg>
<div class="abs" style="left:1176px;top:771px;width:14px;height:14.2px;background:#f8f8f8;"></div>
<div class="abs" style="left:747px;top:787px;width:1px;height:18px;background:#e6e6e6;"></div>
<div class="t" style="left:891.00px;top:791.36px;font-size:10.7px;color:#222;transform:scaleX(0.955);transform-origin:0 0">Summe</div>
<div class="abs" style="left:714.3px;top:811.2px;width:151.5px;height:28.8px;background:#f5f5f5;border:1px solid #d0d0d0"></div>
<div class="abs" style="left:836.6px;top:812.2px;width:28.2px;height:26.8px;background:#fff;"></div>
<div class="t" style="left:724.40px;top:820.85px;font-size:11.3px;color:#777">Ansichtenauswahl</div>
<svg class="abs" style="left:846.5px;top:823.5px" width="9" height="5" viewBox="0 0 9 5"><polygon points="0,0 9,0 4.5,5" fill="#888"/></svg>
<div class="abs" style="left:869.8px;top:811.1px;width:221.8px;height:28.8px;background:#96bcbc;"></div>
<svg class="abs" style="left:919.7px;top:818.5px" width="13" height="13" viewBox="0 0 13 13"><path d="M11 5A5 5 0 0 0 2.2 3.6" fill="none" stroke="#111" stroke-width="2"/><polygon points="12.6,0.6 12.6,5.8 7.6,5.8" fill="#111"/><path d="M2 8A5 5 0 0 0 10.8 9.4" fill="none" stroke="#111" stroke-width="2"/><polygon points="0.4,12.4 0.4,7.2 5.4,7.2" fill="#111"/></svg>
<div class="t" style="left:940.90px;top:821.36px;font-size:10.7px;color:#222;transform:scaleX(0.964);transform-origin:0 0">Abfrage übernehmen</div>
<div class="abs" style="left:1096px;top:811.1px;width:27.9px;height:28.8px;background:#96bcbc;"></div>
<div class="abs" style="left:1128.3px;top:811.1px;width:27.9px;height:28.8px;background:#96bcbc;"></div>
<div class="abs" style="left:1160.3px;top:811.1px;width:27.9px;height:28.8px;background:#96bcbc;"></div>
<svg class="abs" style="left:1103.5px;top:819px" width="13" height="13" viewBox="-6.5 -6.5 13 13"><g fill="#111"><circle r="4.4"/><rect x="-1.6" y="-6.3" width="3.2" height="12.6" rx="0.6"/><rect x="-1.6" y="-6.3" width="3.2" height="12.6" rx="0.6" transform="rotate(45)"/><rect x="-1.6" y="-6.3" width="3.2" height="12.6" rx="0.6" transform="rotate(90)"/><rect x="-1.6" y="-6.3" width="3.2" height="12.6" rx="0.6" transform="rotate(135)"/></g><circle r="1.9" fill="#96bcbc"/></svg>
<svg class="abs" style="left:1135.5px;top:818px" width="13" height="14" viewBox="0 0 13 14"><ellipse cx="6.5" cy="2.3" rx="6.5" ry="2.3" fill="#111"/><path d="M0 3.6C0 5 2.9 6 6.5 6S13 5 13 3.6V6.2C13 7.5 10.1 8.5 6.5 8.5S0 7.5 0 6.2z" fill="#111"/><path d="M0 7.6C0 9 2.9 10 6.5 10S13 9 13 7.6V10.2C13 11.5 10.1 12.5 6.5 12.5S0 11.5 0 10.2z" fill="#111"/><path d="M0 11.2C0 12.6 2.9 13.6 6.5 13.6S13 12.6 13 11.2V11.6C13 12.9 10.1 14 6.5 14S0 12.9 0 11.6z" fill="#111"/></svg>
<svg class="abs" style="left:1166px;top:819px" width="17" height="13" viewBox="0 0 17 13"><path d="M0.7 0V12.3H17" fill="none" stroke="#111" stroke-width="1.4"/><rect x="3" y="6.5" width="2.2" height="4.6" fill="#111"/><rect x="6.3" y="3.6" width="2.2" height="7.5" fill="#111"/><rect x="9.6" y="5.2" width="2.2" height="5.9" fill="#111"/><rect x="12.9" y="2" width="2.2" height="9.1" fill="#111"/></svg>
<div class="abs" style="left:1200px;top:118px;width:485px;height:236px;background:rgba(255,255,255,0.97);border:1px solid #d6d6d6"></div>
<div class="abs" style="left:1200px;top:118px;width:485px;height:37px;background:#96bcbc;"></div><div class="t" style="left:1234.00px;top:128.87px;font-size:14px;color:#1e1e1e;transform:scaleX(0.867);transform-origin:0 0">Prozessbearbeitung</div>
<svg class="abs" style="left:1213.3px;top:131px" width="13" height="11" viewBox="0 0 13 11"><rect x="0.7" y="0.7" width="11.6" height="9.6" rx="1" fill="none" stroke="#111" stroke-width="1.4"/><rect x="0" y="0" width="13" height="2.6" fill="#111"/><path d="M0.7 5.2H12.3M0.7 7.8H12.3M4.5 2.6V10.3M8.5 2.6V10.3" stroke="#111" stroke-width="1.1"/></svg>
<div class="abs" style="left:1201px;top:155.5px;width:23px;height:25px;background:#f3efec;"></div>
<svg class="abs" style="left:1206.5px;top:165px" width="12" height="7" viewBox="0 0 12 7"><path d="M1 6L6 1.2 11 6" fill="none" stroke="#bdbdbd" stroke-width="2"/></svg>
<div class="abs" style="left:1201px;top:180.5px;width:23px;height:82px;background:#96bcbc;"></div>
<div class="t" style="left:1209px;top:253.5px;font-size:10.7px;color:#333;transform:rotate(-90deg) scaleX(0.955);transform-origin:0 0">Alle Aufgaben</div>
<div class="abs" style="left:1201px;top:262.5px;width:23px;height:91px;background:#f3efec;"></div>
<div class="abs" style="left:1201px;top:262.5px;width:23px;height:71.5px;overflow:hidden"><div class="t" style="left:8px;top:76.5px;font-size:10.7px;color:#333;transform:rotate(-90deg) scaleX(0.955);transform-origin:0 0">Alle Aufgaben</div></div>
<svg class="abs" style="left:1206.5px;top:340px" width="12" height="7" viewBox="0 0 12 7"><path d="M1 1L6 5.8 11 1" fill="none" stroke="#6f6f6f" stroke-width="2"/></svg>
<div class="abs" style="left:1224px;top:155.5px;width:3px;height:198.5px;background:#96bcbc;"></div>
<div class="abs" style="left:1227px;top:155.5px;width:456px;height:27px;background:#fff;"></div>
<div class="abs" style="left:1360.5px;top:156px;width:1px;height:26.5px;background:#dcdcdc;"></div>
<div class="abs" style="left:1494.4px;top:156px;width:1px;height:26.5px;background:#dcdcdc;"></div>
<div class="abs" style="left:1629.2px;top:156px;width:1px;height:26.5px;background:#dcdcdc;"></div>
<div class="t" style="left:1236.40px;top:165.16px;font-size:10.7px;color:#555;transform:scaleX(0.914);transform-origin:0 0">ProzessID</div>
<div class="t" style="left:1370.40px;top:165.16px;font-size:10.7px;color:#555;transform:scaleX(0.988);transform-origin:0 0">Bearbeitungsstatus</div>
<div class="t" style="left:1504.20px;top:165.16px;font-size:10.7px;color:#555;transform:scaleX(0.967);transform-origin:0 0">Prozessstart</div>
<svg class="abs" style="left:1572.5px;top:165.5px" width="6" height="10" viewBox="0 0 6 10"><path d="M3 0V9" stroke="#888" stroke-width="1.3"/><path d="M0.5 6.5L3 9.5 5.5 6.5" fill="none" stroke="#888" stroke-width="1.2"/></svg>
<div class="abs" style="left:1227px;top:183px;width:442px;height:170px;overflow:hidden"><div class="abs" style="left:0px;top:21.3px;width:442px;height:1px;background:#e8e8e8;"></div><div class="t" style="left:9.40px;top:6.51px;font-size:10.7px;color:#444;transform:scaleX(0.847);transform-origin:0 0">3334133</div><svg class="abs" style="left:142.8px;top:4.550000000000006px" width="14" height="14" viewBox="0 0 14 14"><rect x="0" y="0" width="14" height="14" rx="2.5" fill="#0000ee"/><rect x="2.6" y="3.6" width="8.8" height="6.8" fill="#fff"/><path d="M2.6 3.6L7 7.2 11.4 3.6" fill="none" stroke="#0000ee" stroke-width="1"/></svg><div class="t" style="left:159.50px;top:7.91px;font-size:10.7px;color:#444;transform:scaleX(0.953);transform-origin:0 0">Neu</div><div class="t" style="left:277.20px;top:6.51px;font-size:10.7px;color:#444;transform:scaleX(0.872);transform-origin:0 0">13.04.2018</div><svg class="abs" style="left:413.8px;top:3.850000000000006px" width="17" height="14" viewBox="0 0 17 14"><path d="M8 2.2H3C1.8 2.2 1 3 1 4.2V11C1 12.2 1.8 13 3 13H10C11.2 13 12 12.2 12 11V8" fill="none" stroke="#111" stroke-width="1.6"/><path d="M6.5 8.5L14 1" fill="none" stroke="#111" stroke-width="2"/><polygon points="10,0 16.5,0 16.5,6.5" fill="#111"/></svg><div class="abs" style="left:0px;top:22.3px;width:442px;height:22.8px;background:#f4f4f4;"></div><div class="abs" style="left:0px;top:44.1px;width:442px;height:1px;background:#e8e8e8;"></div><div class="t" style="left:9.40px;top:29.06px;font-size:10.7px;color:#444;transform:scaleX(0.843);transform-origin:0 0">201507211156221810</div><svg class="abs" style="left:142.8px;top:27.099999999999987px" width="14" height="14" viewBox="0 0 14 14"><rect x="0" y="0" width="14" height="14" rx="2.5" fill="#0000ee"/><rect x="2.6" y="3.6" width="8.8" height="6.8" fill="#fff"/><path d="M2.6 3.6L7 7.2 11.4 3.6" fill="none" stroke="#0000ee" stroke-width="1"/></svg><div class="t" style="left:159.50px;top:30.46px;font-size:10.7px;color:#444;transform:scaleX(0.953);transform-origin:0 0">Neu</div><div class="t" style="left:277.20px;top:29.06px;font-size:10.7px;color:#444;transform:scaleX(0.872);transform-origin:0 0">12.04.2018</div><svg class="abs" style="left:413.8px;top:26.399999999999988px" width="17" height="14" viewBox="0 0 17 14"><path d="M8 2.2H3C1.8 2.2 1 3 1 4.2V11C1 12.2 1.8 13 3 13H10C11.2 13 12 12.2 12 11V8" fill="none" stroke="#111" stroke-width="1.6"/><path d="M6.5 8.5L14 1" fill="none" stroke="#111" stroke-width="2"/><polygon points="10,0 16.5,0 16.5,6.5" fill="#111"/></svg><div class="abs" style="left:0px;top:66.4px;width:442px;height:1px;background:#e8e8e8;"></div><div class="t" style="left:9.40px;top:51.61px;font-size:10.7px;color:#444;transform:scaleX(0.850);transform-origin:0 0">201507211156221811</div><svg class="abs" style="left:142.8px;top:49.65px" width="14" height="14" viewBox="0 0 14 14"><rect x="0" y="0" width="14" height="14" rx="2.5" fill="#0000ee"/><rect x="2.6" y="3.6" width="8.8" height="6.8" fill="#fff"/><path d="M2.6 3.6L7 7.2 11.4 3.6" fill="none" stroke="#0000ee" stroke-width="1"/></svg><div class="t" style="left:159.50px;top:53.01px;font-size:10.7px;color:#444;transform:scaleX(0.953);transform-origin:0 0">Neu</div><div class="t" style="left:277.20px;top:51.61px;font-size:10.7px;color:#444;transform:scaleX(0.872);transform-origin:0 0">12.04.2018</div><svg class="abs" style="left:413.8px;top:48.95px" width="17" height="14" viewBox="0 0 17 14"><path d="M8 2.2H3C1.8 2.2 1 3 1 4.2V11C1 12.2 1.8 13 3 13H10C11.2 13 12 12.2 12 11V8" fill="none" stroke="#111" stroke-width="1.6"/><path d="M6.5 8.5L14 1" fill="none" stroke="#111" stroke-width="2"/><polygon points="10,0 16.5,0 16.5,6.5" fill="#111"/></svg><div class="abs" style="left:0px;top:67.4px;width:442px;height:22.2px;background:#f4f4f4;"></div><div class="abs" style="left:0px;top:88.6px;width:442px;height:1px;background:#e8e8e8;"></div><div class="t" style="left:9.40px;top:73.86px;font-size:10.7px;color:#444;transform:scaleX(0.843);transform-origin:0 0">201507211156221812</div><svg class="abs" style="left:142.8px;top:71.9px" width="14" height="14" viewBox="0 0 14 14"><rect x="0" y="0" width="14" height="14" rx="2.5" fill="#0000ee"/><rect x="2.6" y="3.6" width="8.8" height="6.8" fill="#fff"/><path d="M2.6 3.6L7 7.2 11.4 3.6" fill="none" stroke="#0000ee" stroke-width="1"/></svg><div class="t" style="left:159.50px;top:75.26px;font-size:10.7px;color:#444;transform:scaleX(0.953);transform-origin:0 0">Neu</div><div class="t" style="left:277.20px;top:73.86px;font-size:10.7px;color:#444;transform:scaleX(0.872);transform-origin:0 0">12.04.2018</div><svg class="abs" style="left:413.8px;top:71.2px" width="17" height="14" viewBox="0 0 17 14"><path d="M8 2.2H3C1.8 2.2 1 3 1 4.2V11C1 12.2 1.8 13 3 13H10C11.2 13 12 12.2 12 11V8" fill="none" stroke="#111" stroke-width="1.6"/><path d="M6.5 8.5L14 1" fill="none" stroke="#111" stroke-width="2"/><polygon points="10,0 16.5,0 16.5,6.5" fill="#111"/></svg><div class="abs" style="left:0px;top:111px;width:442px;height:1px;background:#e8e8e8;"></div><div class="t" style="left:9.40px;top:96.16px;font-size:10.7px;color:#444;transform:scaleX(0.843);transform-origin:0 0">201507211156221813</div><svg class="abs" style="left:142.8px;top:94.20000000000002px" width="14" height="14" viewBox="0 0 14 14"><rect x="0" y="0" width="14" height="14" rx="2.5" fill="#0000ee"/><rect x="2.6" y="3.6" width="8.8" height="6.8" fill="#fff"/><path d="M2.6 3.6L7 7.2 11.4 3.6" fill="none" stroke="#0000ee" stroke-width="1"/></svg><div class="t" style="left:159.50px;top:97.56px;font-size:10.7px;color:#444;transform:scaleX(0.953);transform-origin:0 0">Neu</div><div class="t" style="left:277.20px;top:96.16px;font-size:10.7px;color:#444;transform:scaleX(0.872);transform-origin:0 0">12.04.2018</div><svg class="abs" style="left:413.8px;top:93.50000000000001px" width="17" height="14" viewBox="0 0 17 14"><path d="M8 2.2H3C1.8 2.2 1 3 1 4.2V11C1 12.2 1.8 13 3 13H10C11.2 13 12 12.2 12 11V8" fill="none" stroke="#111" stroke-width="1.6"/><path d="M6.5 8.5L14 1" fill="none" stroke="#111" stroke-width="2"/><polygon points="10,0 16.5,0 16.5,6.5" fill="#111"/></svg><div class="abs" style="left:0px;top:112px;width:442px;height:22.4px;background:#f4f4f4;"></div><div class="abs" style="left:0px;top:133.4px;width:442px;height:1px;background:#e8e8e8;"></div><div class="t" style="left:9.40px;top:118.56px;font-size:10.7px;color:#444;transform:scaleX(0.843);transform-origin:0 0">201507211156221814</div><svg class="abs" style="left:142.8px;top:116.6px" width="14" height="14" viewBox="0 0 14 14"><rect x="0" y="0" width="14" height="14" rx="2.5" fill="#0000ee"/><rect x="2.6" y="3.6" width="8.8" height="6.8" fill="#fff"/><path d="M2.6 3.6L7 7.2 11.4 3.6" fill="none" stroke="#0000ee" stroke-width="1"/></svg><div class="t" style="left:159.50px;top:119.96px;font-size:10.7px;color:#444;transform:scaleX(0.953);transform-origin:0 0">Neu</div><div class="t" style="left:277.20px;top:118.56px;font-size:10.7px;color:#444;transform:scaleX(0.872);transform-origin:0 0">12.04.2018</div><svg class="abs" style="left:413.8px;top:115.89999999999999px" width="17" height="14" viewBox="0 0 17 14"><path d="M8 2.2H3C1.8 2.2 1 3 1 4.2V11C1 12.2 1.8 13 3 13H10C11.2 13 12 12.2 12 11V8" fill="none" stroke="#111" stroke-width="1.6"/><path d="M6.5 8.5L14 1" fill="none" stroke="#111" stroke-width="2"/><polygon points="10,0 16.5,0 16.5,6.5" fill="#111"/></svg><div class="abs" style="left:0px;top:155.6px;width:442px;height:1px;background:#e8e8e8;"></div><div class="t" style="left:9.40px;top:140.86px;font-size:10.7px;color:#444;transform:scaleX(0.843);transform-origin:0 0">201507211156221815</div><svg class="abs" style="left:142.8px;top:138.9px" width="14" height="14" viewBox="0 0 14 14"><rect x="0" y="0" width="14" height="14" rx="2.5" fill="#0000ee"/><rect x="2.6" y="3.6" width="8.8" height="6.8" fill="#fff"/><path d="M2.6 3.6L7 7.2 11.4 3.6" fill="none" stroke="#0000ee" stroke-width="1"/></svg><div class="t" style="left:159.50px;top:142.26px;font-size:10.7px;color:#444;transform:scaleX(0.953);transform-origin:0 0">Neu</div><div class="t" style="left:277.20px;top:140.86px;font-size:10.7px;color:#444;transform:scaleX(0.885);transform-origin:0 0">11.04.2018</div><svg class="abs" style="left:413.8px;top:138.2px" width="17" height="14" viewBox="0 0 17 14"><path d="M8 2.2H3C1.8 2.2 1 3 1 4.2V11C1 12.2 1.8 13 3 13H10C11.2 13 12 12.2 12 11V8" fill="none" stroke="#111" stroke-width="1.6"/><path d="M6.5 8.5L14 1" fill="none" stroke="#111" stroke-width="2"/><polygon points="10,0 16.5,0 16.5,6.5" fill="#111"/></svg><div class="abs" style="left:0px;top:156.6px;width:442px;height:22.3px;background:#f4f4f4;"></div><div class="abs" style="left:0px;top:177.9px;width:442px;height:1px;background:#e8e8e8;"></div><div class="t" style="left:9.40px;top:163.11px;font-size:10.7px;color:#444;transform:scaleX(0.843);transform-origin:0 0">201507211156221816</div><svg class="abs" style="left:142.8px;top:161.15px" width="14" height="14" viewBox="0 0 14 14"><rect x="0" y="0" width="14" height="14" rx="2.5" fill="#0000ee"/><rect x="2.6" y="3.6" width="8.8" height="6.8" fill="#fff"/><path d="M2.6 3.6L7 7.2 11.4 3.6" fill="none" stroke="#0000ee" stroke-width="1"/></svg><div class="t" style="left:159.50px;top:164.51px;font-size:10.7px;color:#444;transform:scaleX(0.953);transform-origin:0 0">Neu</div><div class="t" style="left:277.20px;top:163.11px;font-size:10.7px;color:#444;transform:scaleX(0.885);transform-origin:0 0">11.04.2018</div><svg class="abs" style="left:413.8px;top:160.45px" width="17" height="14" viewBox="0 0 17 14"><path d="M8 2.2H3C1.8 2.2 1 3 1 4.2V11C1 12.2 1.8 13 3 13H10C11.2 13 12 12.2 12 11V8" fill="none" stroke="#111" stroke-width="1.6"/><path d="M6.5 8.5L14 1" fill="none" stroke="#111" stroke-width="2"/><polygon points="10,0 16.5,0 16.5,6.5" fill="#111"/></svg></div>
<div class="abs" style="left:1669px;top:183px;width:14.5px;height:170px;background:#f1f1f1;"></div>
<svg class="abs" style="left:1672.5px;top:189px" width="8" height="4" viewBox="0 0 8 4"><polygon points="0,4 8,4 4,0" fill="#a3a3a3"/></svg>
<div class="abs" style="left:1671px;top:198.8px;width:11.2px;height:42.2px;background:#c1c1c1;"></div>
<svg class="abs" style="left:1672.5px;top:343.5px" width="8" height="4" viewBox="0 0 8 4"><polygon points="0,0 8,0 4,4" fill="#505050"/></svg>
<div class="abs" style="left:1200px;top:364px;width:485px;height:236px;background:rgba(255,255,255,0.97);border:1px solid #d6d6d6"></div>
<div class="abs" style="left:1200px;top:364px;width:485px;height:37px;background:#96bcbc;"></div><div class="t" style="left:1234.40px;top:374.87px;font-size:14px;color:#1e1e1e;transform:scaleX(0.833);transform-origin:0 0">Aufgaben (5)</div>
<svg class="abs" style="left:1213.3px;top:376px" width="13" height="13" viewBox="0 0 13 13"><circle cx="6.5" cy="6.5" r="6.5" fill="#111"/><path d="M3.4 6.6L5.6 8.8 9.8 4.6" fill="none" stroke="#96bcbc" stroke-width="1.9"/></svg>
<div class="abs" style="left:1260.5px;top:402px;width:1px;height:27.4px;background:#dcdcdc;"></div>
<div class="abs" style="left:1320.2px;top:402px;width:1px;height:27.4px;background:#dcdcdc;"></div>
<div class="abs" style="left:1439px;top:402px;width:1px;height:27.4px;background:#dcdcdc;"></div>
<div class="abs" style="left:1503.5px;top:402px;width:1px;height:27.4px;background:#dcdcdc;"></div>
<div class="abs" style="left:1570.4px;top:402px;width:1px;height:27.4px;background:#dcdcdc;"></div>
<div class="abs" style="left:1634.6px;top:402px;width:1px;height:27.4px;background:#dcdcdc;"></div>
<svg class="abs" style="left:1209.8px;top:411px" width="10" height="10" viewBox="0 0 10 10"><circle cx="5" cy="5" r="4.3" fill="none" stroke="#4caf50" stroke-width="1.3"/><path d="M5 2.4V5.3H3.3" fill="none" stroke="#4caf50" stroke-width="1"/></svg>
<div class="t" style="left:1223.80px;top:412.01px;font-size:10.4px;color:#555;transform:scaleX(0.956);transform-origin:0 0">Ers...</div>
<svg class="abs" style="left:1269.8px;top:410.8px" width="12" height="11" viewBox="0 0 12 11"><circle cx="6" cy="3.3" r="2.3" fill="#4caf50"/><path d="M2.3 10.5C2.3 7.5 3.8 6 6 6S9.7 7.5 9.7 10.5z" fill="#4caf50"/><circle cx="2" cy="2.2" r="1.6" fill="#4caf50"/><circle cx="10" cy="2.2" r="1.6" fill="#4caf50"/><path d="M0 7.6C0 5.6 0.8 4.4 2.2 4.4 2.8 4.4 3.2 4.6 3.6 5 2.6 5.8 2.1 6.6 2 7.6z" fill="#4caf50"/><path d="M12 7.6C12 5.6 11.2 4.4 9.8 4.4 9.2 4.4 8.8 4.6 8.4 5 9.4 5.8 9.9 6.6 10 7.6z" fill="#4caf50"/></svg>
<div class="t" style="left:1286.20px;top:412.01px;font-size:10.4px;color:#555;transform:scaleX(0.915);transform-origin:0 0">Von</div>
<svg class="abs" style="left:1329.5px;top:411.8px" width="8" height="9" viewBox="0 0 8 9"><path d="M0 0H7.7V8.6L3.85 5.8 0 8.6z" fill="#4caf50"/></svg>
<div class="t" style="left:1339.80px;top:412.01px;font-size:10.4px;color:#555;transform:scaleX(1.071);transform-origin:0 0">Betreff</div>
<svg class="abs" style="left:1448px;top:410.6px" width="11" height="11" viewBox="0 0 11 11"><rect x="0.6" y="1.6" width="9.8" height="8.8" rx="0.8" fill="none" stroke="#4caf50" stroke-width="1.1"/><rect x="0.6" y="1.6" width="9.8" height="2.4" fill="#4caf50"/><rect x="2.3" y="0" width="1.3" height="2.6" fill="#4caf50"/><rect x="7.4" y="0" width="1.3" height="2.6" fill="#4caf50"/><path d="M0.6 6H10.4M0.6 8.2H10.4M3.1 4V10.4M5.5 4V10.4M7.9 4V10.4" stroke="#4caf50" stroke-width="0.7"/></svg>
<div class="t" style="left:1462.80px;top:412.01px;font-size:10.4px;color:#555;transform:scaleX(0.962);transform-origin:0 0">Bis</div>
<svg class="abs" style="left:1512.5px;top:410.6px" width="11" height="11" viewBox="0 0 11 11"><rect x="0.6" y="1.6" width="9.8" height="8.8" rx="0.8" fill="none" stroke="#4caf50" stroke-width="1.1"/><rect x="0.6" y="1.6" width="9.8" height="2.4" fill="#4caf50"/><rect x="2.3" y="0" width="1.3" height="2.6" fill="#4caf50"/><rect x="7.4" y="0" width="1.3" height="2.6" fill="#4caf50"/><path d="M3.8 5.4L7.2 8.8M7.2 5.4L3.8 8.8" stroke="#333" stroke-width="0.9"/></svg>
<div class="t" style="left:1528.10px;top:412.01px;font-size:10.4px;color:#555;transform:scaleX(1.019);transform-origin:0 0">Frist</div>
<svg class="abs" style="left:1579.3px;top:410.6px" width="11" height="11" viewBox="0 0 11 11"><rect x="0.6" y="1.6" width="9.8" height="8.8" rx="0.8" fill="none" stroke="#4caf50" stroke-width="1.1"/><rect x="0.6" y="1.6" width="9.8" height="2.4" fill="#4caf50"/><rect x="2.3" y="0" width="1.3" height="2.6" fill="#4caf50"/><rect x="7.4" y="0" width="1.3" height="2.6" fill="#4caf50"/><path d="M3 6.8L4.8 8.5 8 5.2" fill="none" stroke="#4caf50" stroke-width="1"/></svg>
<div class="t" style="left:1595.00px;top:412.01px;font-size:10.4px;color:#555;transform:scaleX(1.011);transform-origin:0 0">Status</div>
<svg class="abs" style="left:1644.2px;top:411.5px" width="11" height="9" viewBox="0 0 11 9"><path d="M6.5 1.2H1.6C1 1.2 0.6 1.6 0.6 2.2V7.6C0.6 8.1 1 8.4 1.6 8.4H7C7.5 8.4 7.9 8.1 7.9 7.6V5" fill="none" stroke="#4caf50" stroke-width="1.1"/><path d="M4 6.2L4.4 4.6 9 0 10.6 1.6 6 6.2z" fill="#4caf50"/></svg>
<div class="t" style="left:1659.20px;top:412.01px;font-size:10.4px;color:#555;transform:scaleX(0.916);transform-origin:0 0">A...</div>
<div class="abs" style="left:1201px;top:451.9px;width:483px;height:1px;background:#e6e6e6;"></div>
<div class="t" style="left:1210.00px;top:435.81px;font-size:10.7px;color:#444;transform:scaleX(0.957);transform-origin:0 0">08.02....</div>
<div class="t" style="left:1270.30px;top:435.81px;font-size:10.7px;color:#444;transform:scaleX(0.946);transform-origin:0 0">bpcad...</div>
<div class="t" style="left:1330.00px;top:435.81px;font-size:10.7px;color:#444;transform:scaleX(0.963);transform-origin:0 0">Bitte prüfen ob sch...</div>
<div class="t" style="left:1448.50px;top:435.81px;font-size:10.7px;color:#444;transform:scaleX(0.961);transform-origin:0 0">09.02.2...</div>
<div class="abs" style="left:1503.9px;top:430.6px;width:66.8px;height:19.7px;background:#81c784;"></div>
<svg class="abs" style="left:1580px;top:433.75px" width="14" height="14" viewBox="0 0 14 14"><circle cx="7" cy="7" r="7" fill="#42a5f5"/></svg>
<div class="t" style="left:1598.60px;top:437.61px;font-size:10.7px;color:#444;transform:scaleX(0.937);transform-origin:0 0">Erle...</div>
<svg class="abs" style="left:1638.3px;top:433.05px" width="17" height="14" viewBox="0 0 17 14"><path d="M8 2.2H3C1.8 2.2 1 3 1 4.2V11C1 12.2 1.8 13 3 13H10C11.2 13 12 12.2 12 11V8" fill="none" stroke="#111" stroke-width="1.6"/><path d="M6.5 8.5L14 1" fill="none" stroke="#111" stroke-width="2"/><polygon points="10,0 16.5,0 16.5,6.5" fill="#111"/></svg>
<svg class="abs" style="left:1654.7px;top:433.05px" width="15" height="14" viewBox="0 0 15 14"><path d="M6 0H9V5.5H12L7.5 10 3 5.5H6z" fill="#bdbdbd"/><path d="M0 9.5H5L7.5 12 10 9.5H15V14H0z" fill="#bdbdbd"/><rect x="10.5" y="11.2" width="1.2" height="1.2" fill="#fff"/><rect x="12.5" y="11.2" width="1.2" height="1.2" fill="#fff"/></svg>
<div class="abs" style="left:1201px;top:452.9px;width:483px;height:22.2px;background:#f4f4f4;"></div>
<div class="abs" style="left:1201px;top:474.1px;width:483px;height:1px;background:#e6e6e6;"></div>
<div class="t" style="left:1210.00px;top:457.96px;font-size:10.7px;color:#444;transform:scaleX(0.957);transform-origin:0 0">08.02....</div>
<div class="t" style="left:1270.30px;top:457.96px;font-size:10.7px;color:#444;transform:scaleX(0.946);transform-origin:0 0">bpcad...</div>
<div class="t" style="left:1330.00px;top:457.96px;font-size:10.7px;color:#444;transform:scaleX(0.978);transform-origin:0 0">Test Wingas</div>
<div class="t" style="left:1448.50px;top:457.96px;font-size:10.7px;color:#444;transform:scaleX(0.961);transform-origin:0 0">08.02.2...</div>
<div class="abs" style="left:1503.9px;top:452.7px;width:66.8px;height:19.8px;background:#f06292;"></div>
<svg class="abs" style="left:1580px;top:455.90px" width="14" height="14" viewBox="0 0 14 14"><circle cx="7" cy="7" r="6.1" fill="none" stroke="#42a5f5" stroke-width="1.8"/></svg>
<div class="t" style="left:1598.60px;top:459.76px;font-size:10.7px;color:#444;transform:scaleX(0.907);transform-origin:0 0">Neu</div>
<svg class="abs" style="left:1638.3px;top:455.2px" width="17" height="14" viewBox="0 0 17 14"><path d="M8 2.2H3C1.8 2.2 1 3 1 4.2V11C1 12.2 1.8 13 3 13H10C11.2 13 12 12.2 12 11V8" fill="none" stroke="#111" stroke-width="1.6"/><path d="M6.5 8.5L14 1" fill="none" stroke="#111" stroke-width="2"/><polygon points="10,0 16.5,0 16.5,6.5" fill="#111"/></svg>
<svg class="abs" style="left:1654.7px;top:455.2px" width="15" height="14" viewBox="0 0 15 14"><path d="M6 0H9V5.5H12L7.5 10 3 5.5H6z" fill="#bdbdbd"/><path d="M0 9.5H5L7.5 12 10 9.5H15V14H0z" fill="#bdbdbd"/><rect x="10.5" y="11.2" width="1.2" height="1.2" fill="#fff"/><rect x="12.5" y="11.2" width="1.2" height="1.2" fill="#fff"/></svg>
<div class="abs" style="left:1201px;top:496.4px;width:483px;height:1px;background:#e6e6e6;"></div>
<div class="t" style="left:1210.00px;top:480.21px;font-size:10.7px;color:#444;transform:scaleX(0.957);transform-origin:0 0">06.02....</div>
<div class="t" style="left:1270.30px;top:480.21px;font-size:10.7px;color:#444;transform:scaleX(0.946);transform-origin:0 0">bpcad...</div>
<div class="t" style="left:1330.00px;top:480.21px;font-size:10.7px;color:#444;transform:scaleX(0.964);transform-origin:0 0">EWorld Testaufgabe</div>
<div class="t" style="left:1448.50px;top:480.21px;font-size:10.7px;color:#444;transform:scaleX(0.961);transform-origin:0 0">06.02.2...</div>
<div class="abs" style="left:1503.9px;top:474.9px;width:66.8px;height:19.9px;background:#f06292;"></div>
<svg class="abs" style="left:1580px;top:478.15px" width="14" height="14" viewBox="0 0 14 14"><circle cx="7" cy="7" r="6.1" fill="none" stroke="#42a5f5" stroke-width="1.8"/></svg>
<div class="t" style="left:1598.60px;top:482.01px;font-size:10.7px;color:#444;transform:scaleX(0.907);transform-origin:0 0">Neu</div>
<svg class="abs" style="left:1638.3px;top:477.45px" width="17" height="14" viewBox="0 0 17 14"><path d="M8 2.2H3C1.8 2.2 1 3 1 4.2V11C1 12.2 1.8 13 3 13H10C11.2 13 12 12.2 12 11V8" fill="none" stroke="#111" stroke-width="1.6"/><path d="M6.5 8.5L14 1" fill="none" stroke="#111" stroke-width="2"/><polygon points="10,0 16.5,0 16.5,6.5" fill="#111"/></svg>
<svg class="abs" style="left:1654.7px;top:477.45px" width="15" height="14" viewBox="0 0 15 14"><path d="M6 0H9V5.5H12L7.5 10 3 5.5H6z" fill="#bdbdbd"/><path d="M0 9.5H5L7.5 12 10 9.5H15V14H0z" fill="#bdbdbd"/><rect x="10.5" y="11.2" width="1.2" height="1.2" fill="#fff"/><rect x="12.5" y="11.2" width="1.2" height="1.2" fill="#fff"/></svg>
<div class="abs" style="left:1201px;top:497.4px;width:483px;height:22.4px;background:#f4f4f4;"></div>
<div class="abs" style="left:1201px;top:518.8px;width:483px;height:1px;background:#e6e6e6;"></div>
<div class="t" style="left:1210.00px;top:502.56px;font-size:10.7px;color:#444;transform:scaleX(0.957);transform-origin:0 0">05.02....</div>
<div class="t" style="left:1270.30px;top:502.56px;font-size:10.7px;color:#444;transform:scaleX(0.946);transform-origin:0 0">bpcad...</div>
<div class="t" style="left:1330.00px;top:502.56px;font-size:10.7px;color:#444">task test</div>
<div class="t" style="left:1448.50px;top:502.56px;font-size:10.7px;color:#444;transform:scaleX(0.961);transform-origin:0 0">05.02.2...</div>
<div class="abs" style="left:1503.9px;top:497.2px;width:66.8px;height:20.0px;background:#f06292;"></div>
<svg class="abs" style="left:1580px;top:500.50px" width="14" height="14" viewBox="0 0 14 14"><circle cx="7" cy="7" r="6.1" fill="none" stroke="#42a5f5" stroke-width="1.8"/></svg>
<div class="t" style="left:1598.60px;top:504.36px;font-size:10.7px;color:#444;transform:scaleX(0.907);transform-origin:0 0">Neu</div>
<svg class="abs" style="left:1638.3px;top:499.79999999999995px" width="17" height="14" viewBox="0 0 17 14"><path d="M8 2.2H3C1.8 2.2 1 3 1 4.2V11C1 12.2 1.8 13 3 13H10C11.2 13 12 12.2 12 11V8" fill="none" stroke="#111" stroke-width="1.6"/><path d="M6.5 8.5L14 1" fill="none" stroke="#111" stroke-width="2"/><polygon points="10,0 16.5,0 16.5,6.5" fill="#111"/></svg>
<svg class="abs" style="left:1654.7px;top:499.79999999999995px" width="15" height="14" viewBox="0 0 15 14"><path d="M6 0H9V5.5H12L7.5 10 3 5.5H6z" fill="#bdbdbd"/><path d="M0 9.5H5L7.5 12 10 9.5H15V14H0z" fill="#bdbdbd"/><rect x="10.5" y="11.2" width="1.2" height="1.2" fill="#fff"/><rect x="12.5" y="11.2" width="1.2" height="1.2" fill="#fff"/></svg>
<div class="abs" style="left:1201px;top:541.0px;width:483px;height:1px;background:#e6e6e6;"></div>
<div class="t" style="left:1210.00px;top:524.86px;font-size:10.7px;color:#444;transform:scaleX(0.957);transform-origin:0 0">02.02....</div>
<div class="t" style="left:1270.30px;top:524.86px;font-size:10.7px;color:#444;transform:scaleX(0.946);transform-origin:0 0">bpcad...</div>
<div class="t" style="left:1330.00px;top:524.86px;font-size:10.7px;color:#444;transform:scaleX(0.983);transform-origin:0 0">erik test e-world 2.0...</div>
<div class="t" style="left:1448.50px;top:524.86px;font-size:10.7px;color:#444;transform:scaleX(0.961);transform-origin:0 0">02.02.2...</div>
<div class="abs" style="left:1503.9px;top:519.6px;width:66.8px;height:19.8px;background:#f06292;"></div>
<svg class="abs" style="left:1580px;top:522.80px" width="14" height="14" viewBox="0 0 14 14"><circle cx="7" cy="7" r="6.1" fill="none" stroke="#42a5f5" stroke-width="1.8"/></svg>
<div class="t" style="left:1598.60px;top:526.66px;font-size:10.7px;color:#444;transform:scaleX(0.907);transform-origin:0 0">Neu</div>
<svg class="abs" style="left:1638.3px;top:522.1px" width="17" height="14" viewBox="0 0 17 14"><path d="M8 2.2H3C1.8 2.2 1 3 1 4.2V11C1 12.2 1.8 13 3 13H10C11.2 13 12 12.2 12 11V8" fill="none" stroke="#111" stroke-width="1.6"/><path d="M6.5 8.5L14 1" fill="none" stroke="#111" stroke-width="2"/><polygon points="10,0 16.5,0 16.5,6.5" fill="#111"/></svg>
<svg class="abs" style="left:1654.7px;top:522.1px" width="15" height="14" viewBox="0 0 15 14"><path d="M6 0H9V5.5H12L7.5 10 3 5.5H6z" fill="#bdbdbd"/><path d="M0 9.5H5L7.5 12 10 9.5H15V14H0z" fill="#bdbdbd"/><rect x="10.5" y="11.2" width="1.2" height="1.2" fill="#fff"/><rect x="12.5" y="11.2" width="1.2" height="1.2" fill="#fff"/></svg>
<div class="abs" style="left:1200px;top:571px;width:485px;height:29px;background:#f5f5f5;border:2px solid #d0d0d0;border-top-width:2px"></div><div class="t" style="left:1211.30px;top:580.45px;font-size:11.3px;color:#8a8a8a;transform:scaleX(0.945);transform-origin:0 0">Suche nach...</div>
<div class="abs" style="left:1200px;top:609.4px;width:485px;height:236px;background:rgba(255,255,255,0.97);border:1px solid #d6d6d6"></div>
<div class="abs" style="left:1200px;top:609.4px;width:485px;height:37px;background:#96bcbc;"></div><div class="t" style="left:1234.60px;top:620.27px;font-size:14px;color:#1e1e1e;transform:scaleX(0.862);transform-origin:0 0">Nachrichten (5)</div>
<svg class="abs" style="left:1212.3px;top:623.2px" width="15" height="11" viewBox="0 0 15 11"><path d="M0 0H15V1.6L7.5 6.6 0 1.6z" fill="#111"/><path d="M0 3.2L7.5 8.2 15 3.2V11H0z" fill="#111"/></svg>
<div class="abs" style="left:1314px;top:647.5px;width:1px;height:27px;background:#dcdcdc;"></div>
<div class="abs" style="left:1399.6px;top:647.5px;width:1px;height:27px;background:#dcdcdc;"></div>
<div class="abs" style="left:1572px;top:647.5px;width:1px;height:27px;background:#dcdcdc;"></div>
<div class="abs" style="left:1634.6px;top:647.5px;width:1px;height:27px;background:#dcdcdc;"></div>
<div class="abs" style="left:1229px;top:647.5px;width:1px;height:131px;background:#e2e2e2;"></div>
<svg class="abs" style="left:1238px;top:657px" width="10" height="10" viewBox="0 0 10 10"><circle cx="5" cy="5" r="4.3" fill="none" stroke="#4caf50" stroke-width="1.3"/><path d="M5 2.4V5.3H3.3" fill="none" stroke="#4caf50" stroke-width="1"/></svg>
<div class="t" style="left:1252.00px;top:657.21px;font-size:10.4px;color:#555;transform:scaleX(1.045);transform-origin:0 0">Erstellt</div>
<svg class="abs" style="left:1322.6px;top:656.5px" width="12" height="11" viewBox="0 0 12 11"><circle cx="6" cy="3.3" r="2.3" fill="#4caf50"/><path d="M2.3 10.5C2.3 7.5 3.8 6 6 6S9.7 7.5 9.7 10.5z" fill="#4caf50"/><circle cx="2" cy="2.2" r="1.6" fill="#4caf50"/><circle cx="10" cy="2.2" r="1.6" fill="#4caf50"/><path d="M0 7.6C0 5.6 0.8 4.4 2.2 4.4 2.8 4.4 3.2 4.6 3.6 5 2.6 5.8 2.1 6.6 2 7.6z" fill="#4caf50"/><path d="M12 7.6C12 5.6 11.2 4.4 9.8 4.4 9.2 4.4 8.8 4.6 8.4 5 9.4 5.8 9.9 6.6 10 7.6z" fill="#4caf50"/></svg>
<div class="t" style="left:1339.50px;top:657.21px;font-size:10.4px;color:#555;transform:scaleX(0.942);transform-origin:0 0">Von</div>
<svg class="abs" style="left:1408.5px;top:657.6px" width="8" height="9" viewBox="0 0 8 9"><path d="M0 0H7.7V8.6L3.85 5.8 0 8.6z" fill="#4caf50"/></svg>
<div class="t" style="left:1419.30px;top:657.21px;font-size:10.4px;color:#555;transform:scaleX(1.057);transform-origin:0 0">Betreff</div>
<svg class="abs" style="left:1581px;top:656.3px" width="9" height="10" viewBox="0 0 9 10"><circle cx="4.5" cy="2.5" r="2.4" fill="#4caf50"/><path d="M0 10C0 6.5 1.6 5 4.5 5S9 6.5 9 10z" fill="#4caf50"/></svg>
<div class="t" style="left:1593.50px;top:657.21px;font-size:10.4px;color:#555;transform:scaleX(0.967);transform-origin:0 0">An</div>
<svg class="abs" style="left:1643.8px;top:657.3px" width="11" height="9" viewBox="0 0 11 9"><path d="M6.5 1.2H1.6C1 1.2 0.6 1.6 0.6 2.2V7.6C0.6 8.1 1 8.4 1.6 8.4H7C7.5 8.4 7.9 8.1 7.9 7.6V5" fill="none" stroke="#4caf50" stroke-width="1.1"/><path d="M4 6.2L4.4 4.6 9 0 10.6 1.6 6 6.2z" fill="#4caf50"/></svg>
<div class="t" style="left:1659.00px;top:657.21px;font-size:10.4px;color:#555;transform:scaleX(0.955);transform-origin:0 0">A...</div>
<div class="abs" style="left:1201px;top:695.6px;width:483px;height:1px;background:#e6e6e6;"></div>
<svg class="abs" style="left:1209.8px;top:680.25px" width="11" height="11" viewBox="0 0 11 11"><rect x="0" y="0" width="11" height="11" rx="1.8" fill="#222"/><path d="M5.5 2.2V8.8M2.2 5.5H8.8" stroke="#fff" stroke-width="1.8"/></svg>
<div class="t" style="left:1238.30px;top:681.41px;font-size:10.7px;color:#444;transform:scaleX(0.902);transform-origin:0 0">06.02.2018 1...</div>
<div class="t" style="left:1323.60px;top:681.41px;font-size:10.7px;color:#444;transform:scaleX(0.985);transform-origin:0 0">bpcadmin</div>
<div class="t" style="left:1409.40px;top:681.41px;font-size:10.7px;color:#444;transform:scaleX(1.033);transform-origin:0 0">fsdfds</div>
<div class="t" style="left:1581.80px;top:681.41px;font-size:10.7px;color:#444;transform:scaleX(0.991);transform-origin:0 0">mich</div>
<svg class="abs" style="left:1638.6px;top:678.45px" width="17" height="14" viewBox="0 0 17 14"><path d="M8 2.2H3C1.8 2.2 1 3 1 4.2V11C1 12.2 1.8 13 3 13H10C11.2 13 12 12.2 12 11V8" fill="none" stroke="#111" stroke-width="1.6"/><path d="M6.5 8.5L14 1" fill="none" stroke="#111" stroke-width="2"/><polygon points="10,0 16.5,0 16.5,6.5" fill="#111"/></svg>
<svg class="abs" style="left:1655.3px;top:678.45px" width="15" height="14" viewBox="0 0 15 14"><path d="M6 0H9V5.5H12L7.5 10 3 5.5H6z" fill="#bdbdbd"/><path d="M0 9.5H5L7.5 12 10 9.5H15V14H0z" fill="#bdbdbd"/><rect x="10.5" y="11.2" width="1.2" height="1.2" fill="#fff"/><rect x="12.5" y="11.2" width="1.2" height="1.2" fill="#fff"/></svg>
<div class="abs" style="left:1201px;top:696.6px;width:483px;height:20.4px;background:#f4f4f4;"></div>
<div class="abs" style="left:1201px;top:716.0px;width:483px;height:1px;background:#e6e6e6;"></div>
<svg class="abs" style="left:1209.8px;top:700.5999999999999px" width="11" height="11" viewBox="0 0 11 11"><rect x="0" y="0" width="11" height="11" rx="1.8" fill="#222"/><path d="M5.5 2.2V8.8M2.2 5.5H8.8" stroke="#fff" stroke-width="1.8"/></svg>
<div class="t" style="left:1238.30px;top:701.76px;font-size:10.7px;color:#444;transform:scaleX(0.902);transform-origin:0 0">05.02.2018 1...</div>
<div class="t" style="left:1323.60px;top:701.76px;font-size:10.7px;color:#444;transform:scaleX(0.985);transform-origin:0 0">bpcadmin</div>
<div class="t" style="left:1409.40px;top:701.76px;font-size:10.7px;color:#444">test msg</div>
<div class="t" style="left:1581.80px;top:701.76px;font-size:10.7px;color:#444;transform:scaleX(0.991);transform-origin:0 0">mich</div>
<svg class="abs" style="left:1638.6px;top:698.8px" width="17" height="14" viewBox="0 0 17 14"><path d="M8 2.2H3C1.8 2.2 1 3 1 4.2V11C1 12.2 1.8 13 3 13H10C11.2 13 12 12.2 12 11V8" fill="none" stroke="#111" stroke-width="1.6"/><path d="M6.5 8.5L14 1" fill="none" stroke="#111" stroke-width="2"/><polygon points="10,0 16.5,0 16.5,6.5" fill="#111"/></svg>
<svg class="abs" style="left:1655.3px;top:698.8px" width="15" height="14" viewBox="0 0 15 14"><path d="M6 0H9V5.5H12L7.5 10 3 5.5H6z" fill="#bdbdbd"/><path d="M0 9.5H5L7.5 12 10 9.5H15V14H0z" fill="#bdbdbd"/><rect x="10.5" y="11.2" width="1.2" height="1.2" fill="#fff"/><rect x="12.5" y="11.2" width="1.2" height="1.2" fill="#fff"/></svg>
<div class="abs" style="left:1201px;top:736.5px;width:483px;height:1px;background:#e6e6e6;"></div>
<svg class="abs" style="left:1209.8px;top:721.05px" width="11" height="11" viewBox="0 0 11 11"><rect x="0" y="0" width="11" height="11" rx="1.8" fill="#222"/><path d="M5.5 2.2V8.8M2.2 5.5H8.8" stroke="#fff" stroke-width="1.8"/></svg>
<div class="t" style="left:1238.30px;top:722.21px;font-size:10.7px;color:#444;transform:scaleX(0.902);transform-origin:0 0">05.02.2018 1...</div>
<div class="t" style="left:1323.60px;top:722.21px;font-size:10.7px;color:#444;transform:scaleX(0.985);transform-origin:0 0">bpcadmin</div>
<div class="t" style="left:1409.40px;top:722.21px;font-size:10.7px;color:#444;transform:scaleX(0.965);transform-origin:0 0">Re: Testaufgabe E-World</div>
<div class="t" style="left:1581.80px;top:722.21px;font-size:10.7px;color:#444;transform:scaleX(0.951);transform-origin:0 0">bpcad...</div>
<svg class="abs" style="left:1638.6px;top:719.25px" width="17" height="14" viewBox="0 0 17 14"><path d="M8 2.2H3C1.8 2.2 1 3 1 4.2V11C1 12.2 1.8 13 3 13H10C11.2 13 12 12.2 12 11V8" fill="none" stroke="#111" stroke-width="1.6"/><path d="M6.5 8.5L14 1" fill="none" stroke="#111" stroke-width="2"/><polygon points="10,0 16.5,0 16.5,6.5" fill="#111"/></svg>
<svg class="abs" style="left:1655.3px;top:719.25px" width="15" height="14" viewBox="0 0 15 14"><path d="M6 0H9V5.5H12L7.5 10 3 5.5H6z" fill="#bdbdbd"/><path d="M0 9.5H5L7.5 12 10 9.5H15V14H0z" fill="#bdbdbd"/><rect x="10.5" y="11.2" width="1.2" height="1.2" fill="#fff"/><rect x="12.5" y="11.2" width="1.2" height="1.2" fill="#fff"/></svg>
<div class="abs" style="left:1201px;top:737.5px;width:483px;height:20.5px;background:#f4f4f4;"></div>
<div class="abs" style="left:1201px;top:757.0px;width:483px;height:1px;background:#e6e6e6;"></div>
<svg class="abs" style="left:1209.8px;top:741.55px" width="11" height="11" viewBox="0 0 11 11"><rect x="0" y="0" width="11" height="11" rx="1.8" fill="#222"/><path d="M5.5 2.2V8.8M2.2 5.5H8.8" stroke="#fff" stroke-width="1.8"/></svg>
<div class="t" style="left:1238.30px;top:742.71px;font-size:10.7px;color:#444;transform:scaleX(0.902);transform-origin:0 0">05.02.2018 1...</div>
<div class="t" style="left:1323.60px;top:742.71px;font-size:10.7px;color:#444;transform:scaleX(0.985);transform-origin:0 0">bpcadmin</div>
<div class="t" style="left:1409.40px;top:742.71px;font-size:10.7px;color:#444;transform:scaleX(0.985);transform-origin:0 0">dsffdsfds</div>
<div class="t" style="left:1581.80px;top:742.71px;font-size:10.7px;color:#444;transform:scaleX(0.991);transform-origin:0 0">mich</div>
<svg class="abs" style="left:1638.6px;top:739.75px" width="17" height="14" viewBox="0 0 17 14"><path d="M8 2.2H3C1.8 2.2 1 3 1 4.2V11C1 12.2 1.8 13 3 13H10C11.2 13 12 12.2 12 11V8" fill="none" stroke="#111" stroke-width="1.6"/><path d="M6.5 8.5L14 1" fill="none" stroke="#111" stroke-width="2"/><polygon points="10,0 16.5,0 16.5,6.5" fill="#111"/></svg>
<svg class="abs" style="left:1655.3px;top:739.75px" width="15" height="14" viewBox="0 0 15 14"><path d="M6 0H9V5.5H12L7.5 10 3 5.5H6z" fill="#bdbdbd"/><path d="M0 9.5H5L7.5 12 10 9.5H15V14H0z" fill="#bdbdbd"/><rect x="10.5" y="11.2" width="1.2" height="1.2" fill="#fff"/><rect x="12.5" y="11.2" width="1.2" height="1.2" fill="#fff"/></svg>
<div class="abs" style="left:1201px;top:777.5px;width:483px;height:1px;background:#e6e6e6;"></div>
<svg class="abs" style="left:1209.8px;top:762.05px" width="11" height="11" viewBox="0 0 11 11"><rect x="0" y="0" width="11" height="11" rx="1.8" fill="#222"/><path d="M5.5 2.2V8.8M2.2 5.5H8.8" stroke="#fff" stroke-width="1.8"/></svg>
<div class="t" style="left:1238.30px;top:763.21px;font-size:10.7px;color:#444;transform:scaleX(0.902);transform-origin:0 0">02.02.2018 1...</div>
<div class="t" style="left:1323.60px;top:763.21px;font-size:10.7px;color:#444;transform:scaleX(0.985);transform-origin:0 0">bpcadmin</div>
<div class="t" style="left:1409.40px;top:763.21px;font-size:10.7px;color:#444;transform:scaleX(1.014);transform-origin:0 0">test erik</div>
<div class="t" style="left:1581.80px;top:763.21px;font-size:10.7px;color:#444;transform:scaleX(0.991);transform-origin:0 0">mich</div>
<svg class="abs" style="left:1638.6px;top:760.25px" width="17" height="14" viewBox="0 0 17 14"><path d="M8 2.2H3C1.8 2.2 1 3 1 4.2V11C1 12.2 1.8 13 3 13H10C11.2 13 12 12.2 12 11V8" fill="none" stroke="#111" stroke-width="1.6"/><path d="M6.5 8.5L14 1" fill="none" stroke="#111" stroke-width="2"/><polygon points="10,0 16.5,0 16.5,6.5" fill="#111"/></svg>
<svg class="abs" style="left:1655.3px;top:760.25px" width="15" height="14" viewBox="0 0 15 14"><path d="M6 0H9V5.5H12L7.5 10 3 5.5H6z" fill="#bdbdbd"/><path d="M0 9.5H5L7.5 12 10 9.5H15V14H0z" fill="#bdbdbd"/><rect x="10.5" y="11.2" width="1.2" height="1.2" fill="#fff"/><rect x="12.5" y="11.2" width="1.2" height="1.2" fill="#fff"/></svg>
<div class="abs" style="left:1229px;top:647.5px;width:1px;height:131px;background:#e2e2e2;"></div>
<div class="abs" style="left:1200px;top:816.3px;width:485px;height:29.1px;background:#f5f5f5;border:2px solid #d0d0d0;border-top-width:2px"></div><div class="t" style="left:1210.70px;top:826.05px;font-size:11.3px;color:#8a8a8a;transform:scaleX(0.945);transform-origin:0 0">Suche nach...</div>
<div id="top">
  <svg class="abs" style="left:-197px;top:-1px" width="1702" height="45">
    <polygon points="1060,0 1418,0 1431,44 1073,44" fill="#dccdbf"/>
    <polygon points="1623,0 1702,0 1702,44 1610,44" fill="#dedbd5"/>
    <rect x="1548" y="1" width="1" height="43" fill="#d3d1cd"/>
    <rect x="1656" y="1" width="1" height="43" fill="#d3d1cd"/>
  </svg>
  <svg class="abs" style="left:10px;top:12px" width="60" height="21" viewBox="207 13 60 21">
    <polygon points="212.5,32.5 216.5,32.5 223,13.5 219,13.5" fill="#c7d6dc"/>
    <polygon points="224.5,32.5 228.5,32.5 235,13.5 231,13.5" fill="#8ec3c3"/>
    <polygon points="236.5,32.5 240.5,32.5 246,13.5 242,13.5" fill="#dccd6c"/>
    <polygon points="247.5,32.5 251.5,32.5 257,13.5 253,13.5" fill="#e2ded9"/>
    <g style="mix-blend-mode:multiply">
    <polygon points="207,13.5 211,13.5 216.5,32.5 212.5,32.5" fill="#d42a3c"/>
    <polygon points="218.5,13.5 222.5,13.5 228.5,32.5 224.5,32.5" fill="#7f93a3"/>
    <polygon points="230.5,13.5 234.5,13.5 240.5,32.5 236.5,32.5" fill="#9a957c"/>
    <polygon points="241.5,13.5 245.5,13.5 251.5,32.5 247.5,32.5" fill="#ea8a44"/>
    </g>
    <polygon points="253,13.5 257,13.5 262.5,32.5 258.5,32.5" fill="#6a7e96"/>
  </svg>
  <svg class="abs" style="left:-197px;top:-1px" width="400" height="45"><g fill="none" stroke="#232323" stroke-width="1.9"><path d="M265.6 13.4L271.1 32.4 276.6 13.4" stroke-linejoin="bevel"/><path d="M282.05 13.4V32.9"/><path d="M288.9 32.9V14.35H293.3C296.4 14.35 297.8 16.2 297.8 18.5 297.8 20.8 296.4 22.7 293.3 22.7H288.9M292.6 22.7L298.2 32.9"/><path d="M301.3 14.35H312.1M306.7 14.35V32.9"/><path d="M316.3 13.4V32.9"/><path d="M323.3 32.9L325.1 14L330.7 31.6 336.4 14 338.3 32.9" stroke-linejoin="bevel"/><ellipse cx="351.4" cy="23.15" rx="5.95" ry="8.8"/></g></svg>
  <div class="abs" style="left:584px;top:8px;width:358px;height:28px;background:#f2f1ef"></div>
  <svg class="abs" style="left:593px;top:15px" width="15" height="15" viewBox="0 0 15 15"><circle cx="7.5" cy="7.5" r="7" fill="#8fb9b9"/><circle cx="7.5" cy="3.8" r="1.3" fill="#f2f1ef"/><path d="M5.8 6.2H8.4V10.6H9.4V11.8H5.8V10.6H6.8V7.4H5.8z" fill="#f2f1ef"/></svg>
  <div class="t" style="left:611.70px;top:19.1px;font-size:10.5px;color:#8fb9b9;transform:scaleX(0.989);transform-origin:0 0">Standardversion (keine) wurde erfolgreich gesetzt.</div>
  <!-- toolbar icons -->
  <svg class="abs" style="left:1196px;top:16px" width="11" height="11" viewBox="0 0 11 11"><path d="M5.5 0.5V10.5M0.5 5.5H10.5" stroke="#111" stroke-width="2.6" stroke-linecap="round"/></svg>
  <svg class="abs" style="left:1223px;top:20px" width="9" height="5" viewBox="0 0 9 5"><polygon points="0,0 8.5,0 4.25,5" fill="#111"/></svg>
  <svg class="abs" style="left:1249px;top:17px" width="13" height="13" viewBox="0 0 13 13"><path d="M1.5 0.8H10L12.2 3V11.2C12.2 11.8 11.8 12.2 11.2 12.2H1.8C1.2 12.2 0.8 11.8 0.8 11.2V1.8C0.8 1.2 1.2 0.8 1.8 0.8z" fill="none" stroke="#222" stroke-width="1.3"/><rect x="3.5" y="1" width="5" height="3.8" fill="#222"/><rect x="3" y="7.2" width="7" height="4.2" fill="none" stroke="#222" stroke-width="1.2"/></svg>
  <svg class="abs" style="left:1277px;top:16px" width="13" height="13" viewBox="0 0 13 13"><path d="M11 5A5 5 0 0 0 2.2 3.6" fill="none" stroke="#111" stroke-width="2"/><polygon points="12.6,0.6 12.6,5.8 7.6,5.8" fill="#111"/><path d="M2 8A5 5 0 0 0 10.8 9.4" fill="none" stroke="#111" stroke-width="2"/><polygon points="0.4,12.4 0.4,7.2 5.4,7.2" fill="#111"/></svg>
  <svg class="abs" style="left:1305px;top:20px" width="9" height="5" viewBox="0 0 9 5"><polygon points="0,0 8.5,0 4.25,5" fill="#111"/></svg>
  <svg class="abs" style="left:1330px;top:17px" width="13" height="13" viewBox="-6.5 -6.5 13 13"><g fill="#111"><circle r="4.4"/><rect x="-1.6" y="-6.3" width="3.2" height="12.6" rx="0.6"/><rect x="-1.6" y="-6.3" width="3.2" height="12.6" rx="0.6" transform="rotate(45)"/><rect x="-1.6" y="-6.3" width="3.2" height="12.6" rx="0.6" transform="rotate(90)"/><rect x="-1.6" y="-6.3" width="3.2" height="12.6" rx="0.6" transform="rotate(135)"/></g><circle r="1.9" fill="#e2e0dc"/></svg>
  <svg class="abs" style="left:1373px;top:15px" width="13" height="15" viewBox="0 0 13 15"><path d="M6.5 1.2C4 1.2 2.5 3.2 2.5 5.6V8.5C2.5 9.8 1.5 11 0.5 11.8V12.6H12.5V11.8C11.5 11 10.5 9.8 10.5 8.5V5.6C10.5 3.2 9 1.2 6.5 1.2z" fill="#111"/><circle cx="6.5" cy="1.2" r="1.1" fill="#111"/><path d="M5 13.3A1.6 1.6 0 0 0 8 13.3z" fill="#111"/></svg>
  <svg class="abs" style="left:1401px;top:17px" width="15" height="13" viewBox="0 0 15 13"><ellipse cx="6" cy="4.6" rx="5.6" ry="4.1" fill="#111"/><path d="M1.8 7L0.8 10.2 4.5 8.3z" fill="#111"/><path d="M12.2 4.4C13.9 5.2 14.7 6.4 14.7 7.7 14.7 8.6 14.2 9.5 13.4 10.1L14 12.3 11.2 10.8C10.6 11 9.9 11.1 9.1 11.1 7.8 11.1 6.6 10.8 5.7 10.2 9.4 10 12.2 7.8 12.2 4.9z" fill="#111"/></svg>
  <svg class="abs" style="left:1426px;top:20px" width="9" height="5" viewBox="0 0 9 5"><polygon points="0,0 8.5,0 4.25,5" fill="#111"/></svg>
  <svg class="abs" style="left:1476px;top:18px" width="13" height="11" viewBox="0 0 13 11"><rect x="0" y="0" width="12.5" height="2.2" rx="0.6" fill="#111"/><rect x="0" y="4.1" width="12.5" height="2.2" rx="0.6" fill="#111"/><rect x="0" y="8.2" width="12.5" height="2.2" rx="0.6" fill="#111"/></svg>
</div>
<div class="abs" style="left:0;top:0;width:1702px;height:1px;background:#b9b9b9"></div>
<div class="abs" style="left:0;top:1px;width:1702px;height:1px;background:#dcdcdc"></div>
<div class="abs" style="left:1700px;top:0;width:2px;height:862px;background:#8cbcf2"></div>
<div class="abs" style="left:0;top:861px;width:1702px;height:1px;background:#8cbcf2"></div>


<div id="side">
  <div id="sidehdr">
    <svg class="abs" style="left:0;top:0" width="30" height="44" viewBox="0 1 30 44"><polygon points="13.2,30.2 15.9,30.2 19.4,16 16.6,16" fill="#c5d3d6" opacity="0.9"/><polygon points="17.4,16 20.1,16 18.6,19.8" fill="#6f8590"/><polygon points="8.9,16 11.8,16 15.9,30.2 13,30.2" fill="#d42a3e"/></svg>
    <div class="t" style="left:28.70px;top:17.65px;font-size:11.3px;color:#1e2626;transform:scaleX(0.900);transform-origin:0 0;-webkit-text-stroke:0.35px #1e2626">Business Process Center</div>
  </div>
  <div id="sidenav"><div class="abs" style="left:0;top:43px;width:196px;height:299px;background:#dfdcd7"></div>
    <div class="nav act" style="top:0">
      <svg width="16" height="14" viewBox="0 0 16 14" style="left:7px;top:14px"><rect x="0.9" y="0.9" width="14.2" height="10.2" rx="1.5" fill="none" stroke="#111" stroke-width="1.8"/><rect x="0" y="8.5" width="16" height="3.3" rx="1" fill="#111"/><rect x="6" y="11" width="4" height="2.2" fill="#111"/><rect x="5" y="12.6" width="6" height="1.2" fill="#111"/></svg>
      <div class="t" style="left:28.80px;top:16.69px;font-size:10.9px;color:#505050;transform:scaleX(0.926);transform-origin:0 0">Process Dashboard</div></div>
    <div class="nav" style="top:43px">
      <svg width="15" height="12" viewBox="0 0 15 12" style="left:7px;top:15px"><rect x="0" y="0" width="15" height="3.2" rx="0.8" fill="#111"/><rect x="10" y="0.9" width="4" height="1.4" fill="#e2e0dc"/><rect x="0" y="4.4" width="15" height="3.2" rx="0.8" fill="#111"/><rect x="5" y="5.3" width="9" height="1.4" fill="#e2e0dc"/><rect x="0" y="8.8" width="15" height="3.2" rx="0.8" fill="#111"/><rect x="8" y="9.7" width="6" height="1.4" fill="#e2e0dc"/></svg>
      <div class="t" style="left:28.80px;top:16.69px;font-size:10.9px;color:#505050;transform:scaleX(0.967);transform-origin:0 0">Process Interaction</div></div>
    <div class="nav" style="top:86px">
      <svg width="14" height="12" viewBox="0 0 14 12" style="left:7px;top:15px"><rect x="0.7" y="0.7" width="12.6" height="10.6" rx="1" fill="none" stroke="#111" stroke-width="1.4"/><rect x="0" y="0" width="14" height="3" fill="#111"/><path d="M0.7 6.2H13.3M0.7 8.8H13.3M4.8 3V11.3M9.2 3V11.3" stroke="#111" stroke-width="1.2"/></svg>
      <div class="t" style="left:28.80px;top:16.69px;font-size:10.9px;color:#505050;transform:scaleX(0.950);transform-origin:0 0">Process Monitoring</div></div>
    <div class="nav" style="top:129px">
      <svg width="16" height="12" viewBox="0 0 16 12" style="left:6px;top:14px"><path d="M6.5 0.8C3.3 0.8 0.8 2.6 0.8 4.8c0 1.2 0.8 2.3 2 3l-0.8 2.2 2.8-1.5c0.8 0.2 1.6 0.3 2.5 0.3 3.2 0 5.7-1.8 5.7-4S9.7 0.8 6.5 0.8z" fill="none" stroke="#111" stroke-width="1.5"/><path d="M13.2 3.5c1.3 0.8 2 1.9 2 3.1 0 1-0.6 2-1.6 2.6l0.8 2.2-2.8-1.4c-0.6 0.1-1.2 0.2-1.8 0.2-1.5 0-2.8-0.4-3.8-1" fill="none" stroke="#111" stroke-width="1.5"/></svg>
      <div class="t" style="left:28.80px;top:16.69px;font-size:10.9px;color:#505050;transform:scaleX(0.947);transform-origin:0 0">Process Collaboration</div></div>
    <div class="nav" style="top:172px">
      <svg width="16" height="12" viewBox="0 0 16 12" style="left:7px;top:15px"><path d="M0.6 0V11.4H16" fill="none" stroke="#111" stroke-width="1.2"/><rect x="2.5" y="6" width="2" height="4.5" fill="#111"/><rect x="5.5" y="3.5" width="2" height="7" fill="#111"/><rect x="8.5" y="5" width="2" height="5.5" fill="#111"/><rect x="11.5" y="2" width="2" height="8.5" fill="#111"/></svg>
      <div class="t" style="left:28.80px;top:16.69px;font-size:10.9px;color:#505050;transform:scaleX(0.932);transform-origin:0 0">Process Analysis</div></div>
    <div class="nav" style="top:215px">
      <svg width="14" height="13" viewBox="0 0 14 13" style="left:7px;top:14px"><path d="M3 0.5H13.5L11 11H1.2C0.4 11 0.2 10.3 0.4 9.6z" fill="#111"/><path d="M1 11.2C0.6 12.3 1.2 12.6 2 12.6H11.3L13.8 2.5" fill="none" stroke="#111" stroke-width="1"/><rect x="4.5" y="2.8" width="6.5" height="1.1" fill="#e2e0dc" transform="skewX(-14)"/><rect x="4.3" y="4.8" width="6.5" height="1.1" fill="#e2e0dc" transform="skewX(-14)"/></svg>
      <div class="t" style="left:28.80px;top:16.69px;font-size:10.9px;color:#505050;transform:scaleX(0.957);transform-origin:0 0">Process Documentation</div></div>
    <div class="nav" style="top:258px">
      <svg width="13" height="14" viewBox="0 0 13 14" style="left:8px;top:14px"><ellipse cx="6.5" cy="2.3" rx="6.5" ry="2.3" fill="#111"/><path d="M0 3.6C0 5 2.9 6 6.5 6S13 5 13 3.6V6.2C13 7.5 10.1 8.5 6.5 8.5S0 7.5 0 6.2z" fill="#111"/><path d="M0 7.6C0 9 2.9 10 6.5 10S13 9 13 7.6V10.2C13 11.5 10.1 12.5 6.5 12.5S0 11.5 0 10.2z" fill="#111"/><path d="M0 11.2C0 12.6 2.9 13.6 6.5 13.6S13 12.6 13 11.2V11.6C13 12.9 10.1 14 6.5 14S0 12.9 0 11.6z" fill="#111"/></svg>
      <div class="t" style="left:28.80px;top:16.69px;font-size:10.9px;color:#505050;transform:scaleX(0.927);transform-origin:0 0">Process Data Management</div></div>
    <div class="nav" style="top:301px">
      <svg width="14" height="15" viewBox="7 359 14 15" style="left:7px;top:13px"><polygon points="9.1,359.8 17,364.2 9.5,366.3" fill="#111"/><polygon points="14.4,361 20.7,361 18.5,364.5 16.8,364" fill="#111"/><polygon points="10.4,367.4 16.2,366.7 13.7,372.1 7.85,372.1" fill="#111"/><polygon points="17.6,366.5 19.5,367.1 19.5,373.2 16.2,370.4" fill="#111"/></svg>
      <div class="t" style="left:28.80px;top:16.69px;font-size:10.9px;color:#505050;transform:scaleX(0.943);transform-origin:0 0">Process Excelence Framework</div></div>
  </div>
  <svg class="abs" style="left:93px;top:842px" width="11" height="11" viewBox="0 0 11 11"><path d="M5.5 1.5L1.8 5.5 5.5 9.5M9.5 1.5L5.8 5.5 9.5 9.5" fill="none" stroke="#555" stroke-width="1.3"/></svg>
</div>
<div id="sideborder"></div>


</body></html>
